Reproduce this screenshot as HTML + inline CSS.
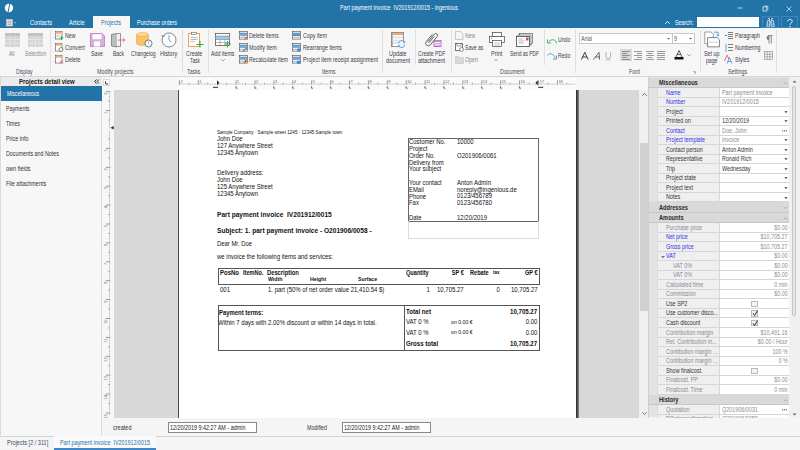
<!DOCTYPE html>
<html><head><meta charset="utf-8">
<style>
*{margin:0;padding:0;box-sizing:border-box}
html,body{width:800px;height:450px;overflow:hidden;background:#f5f5f5;font-family:"Liberation Sans",sans-serif;color:#333}
.a{position:absolute;white-space:nowrap}
.t{position:absolute;white-space:nowrap;font-size:6.6px;line-height:6px;transform:scaleX(0.82);transform-origin:0 0}
.c{position:absolute;white-space:nowrap;font-size:6.6px;line-height:6.5px;text-align:center;width:40px;transform:scaleX(0.82)}
#title{left:0;top:0;width:800px;height:28px;background:#2274a8}
#ribbon{left:0;top:28px;width:800px;height:49px;background:#f6f6f6;border-bottom:1px solid #d6d6d6}
.sep{position:absolute;width:1px;background:#dedede;top:30px;height:43px}
.r{color:#3c3c48}
.g{color:#4a4a5c}
.dis{color:#888}
svg{position:absolute;overflow:visible}
</style></head><body>
<!-- ============ TITLE BAR ============ -->
<div class="a" id="title"></div>
<svg style="left:4px;top:3px" width="10" height="10" viewBox="0 0 10 10"><circle cx="5" cy="5" r="4.2" fill="#fff"></circle><path d="M5.8 0.5 L4 9.5" stroke="#2274a8" stroke-width="1"></path></svg>
<div class="t" style="left: 340px; top: 5px; color: rgb(255, 255, 255); width: auto; transform: scaleX(0.8191); transform-origin: 0px 0px;">Part payment invoice&nbsp; IV201912/0015 - ingenious</div>
<svg style="left:737px;top:7px" width="6" height="2" viewBox="0 0 6 2"><path d="M0.5 1h5" stroke="#e8f0f6" stroke-width="0.8"></path></svg>
<svg style="left:761.5px;top:5px" width="7" height="7" viewBox="0 0 7 7"><rect x="1" y="1.8" width="3.8" height="4.2" fill="none" stroke="#e8f0f6" stroke-width="0.8"></rect><path d="M2.2 1h3.6v4" fill="none" stroke="#e8f0f6" stroke-width="0.6"></path></svg>
<svg style="left:786px;top:5.5px" width="6" height="6" viewBox="0 0 6 6"><path d="M0.5 0.5L5.5 5.5M5.5 0.5L0.5 5.5" stroke="#e8f0f6" stroke-width="0.7"></path></svg>
<!-- tabs -->
<svg style="left:5.5px;top:19px" width="10" height="7" viewBox="0 0 10 7"><rect x="0.5" y="0.5" width="6" height="6.5" fill="#e8e8e8" stroke="#ccc" stroke-width="0.6"></rect><path d="M1.5 2.2h4M1.5 3.8h4M1.5 5.4h4" stroke="#888" stroke-width="0.6"></path><path d="M8 3.5l1 1 1-1z" fill="#fff"></path></svg>
<div class="t" style="left: 30px; top: 19.5px; color: rgb(255, 255, 255); width: auto; transform: scaleX(0.8451); transform-origin: 0px 0px;">Contacts</div>
<div class="t" style="left: 68.5px; top: 19.5px; color: rgb(255, 255, 255); width: auto; transform: scaleX(0.8457); transform-origin: 0px 0px;">Article</div>
<div class="a" style="left:92.5px;top:16px;width:37px;height:12px;background:#f6f6f6"></div>
<div class="t" style="left: 100.5px; top: 19.5px; color: rgb(34, 116, 168); width: auto; transform: scaleX(0.8393); transform-origin: 0px 0px;">Projects</div>
<div class="t" style="left: 136.5px; top: 19.5px; color: rgb(255, 255, 255); width: auto; transform: scaleX(0.8266); transform-origin: 0px 0px;">Purchase orders</div>
<svg style="left:664.5px;top:20.5px" width="5" height="3" viewBox="0 0 5 3"><path d="M0.3 2.7L2.5 0.5L4.7 2.7" stroke="#fff" stroke-width="0.9" fill="none"></path></svg>
<div class="t" style="left: 675px; top: 19.5px; color: rgb(255, 255, 255); width: auto; transform: scaleX(0.8137); transform-origin: 0px 0px;">Search:</div>
<div class="a" style="left:697px;top:17px;width:62px;height:10px;background:#fff"></div>
<div class="a" style="left:762px;top:16px;width:17px;height:12px;border:1px solid #3f87b8"></div>
<div class="a" style="left:781px;top:16px;width:17px;height:12px;border:1px solid #3f87b8"></div>
<svg style="left:766px;top:17.5px" width="9" height="9" viewBox="0 0 9 9"><path d="M1.8 0.5h1.6v2.2M5.6 2.7V0.5h1.6M0.7 8.3l0.9-5.6h2.2v5.6zM5.2 8.3V2.7h2.2l0.9 5.6zM3.8 4.2h1.4" stroke="#fff" stroke-width="0.7" fill="none"></path><path d="M1 6.2h2.6M5.4 6.2h2.6" stroke="#fff" stroke-width="0.5"></path></svg>
<svg style="left:787px;top:18.5px" width="6" height="9" viewBox="0 0 6 9"><path d="M0.8 2.4c0-1.3 1-2 2.2-2s2.2 0.8 2.2 1.9c0 1.6-2.1 1.7-2.1 3.6" stroke="#fff" stroke-width="0.9" fill="none"></path><rect x="2.5" y="7" width="1" height="1.1" fill="#fff"></rect></svg>
<!-- ============ RIBBON ============ -->
<div class="a" id="ribbon"></div>

<!-- Display group -->
<svg style="left:5px;top:33px" width="15" height="14" viewBox="0 0 15 14"><rect x="0" y="0" width="15" height="14" fill="#d4d4d4"></rect><rect x="0" y="0" width="15" height="3" fill="#c2c2c2"></rect><path d="M0 6.5h15M0 10h15M5 3v11M10 3v11" stroke="#eaeaea" stroke-width="0.7"></path></svg>
<div class="dis t" style="left: 9.4px; top: 51px; width: auto; transform: scaleX(0.7642); transform-origin: 0px 0px;">All</div>
<svg style="left:28px;top:33px" width="15" height="14" viewBox="0 0 15 14"><rect x="0" y="0" width="15" height="14" fill="#d4d4d4"></rect><rect x="0" y="0" width="15" height="3" fill="#c2c2c2"></rect><path d="M0 6.5h15M0 10h15M4 3v11M7.5 3v11M11 3v11" stroke="#eaeaea" stroke-width="0.7"></path></svg>
<div class="dis t" style="left: 25px; top: 51px; width: auto; transform: scaleX(0.7737); transform-origin: 0px 0px;">Selection</div>
<div class="g t" style="left: 16.25px; top: 69px; width: auto; transform: scaleX(0.763); transform-origin: 0px 0px;">Display</div>
<div class="sep" style="left:50px"></div>
<!-- Modify projects group -->
<svg style="left:55px;top:31px" width="9" height="9" viewBox="0 0 9 9"><rect x="0.5" y="0.5" width="6.5" height="7.5" fill="#fff" stroke="#555" stroke-width="0.6"></rect><rect x="0.8" y="0.8" width="6" height="2" fill="#f4b27a"></rect><path d="M1.5 4.3h4M1.5 5.8h2" stroke="#888" stroke-width="0.5"></path><path d="M6.5 5v4M4.5 7h4" stroke="#2aa952" stroke-width="1"></path></svg>
<div class="t r" style="left: 65px; top: 33px; width: auto; transform: scaleX(0.7953); transform-origin: 0px 0px;">New</div>
<svg style="left:55px;top:43px" width="9" height="9" viewBox="0 0 9 9"><rect x="0.5" y="0.5" width="6.5" height="7.5" fill="#fff" stroke="#555" stroke-width="0.6"></rect><rect x="0.8" y="0.8" width="6" height="2" fill="#f4b27a"></rect><circle cx="6" cy="6.5" r="2" fill="#fff" stroke="#444" stroke-width="0.6"></circle></svg>
<div class="t r" style="left: 65px; top: 45px; width: auto; transform: scaleX(0.8552); transform-origin: 0px 0px;">Convert</div>
<svg style="left:55px;top:55px" width="9" height="9" viewBox="0 0 9 9"><rect x="0.5" y="0.5" width="6.5" height="7.5" fill="#fff" stroke="#555" stroke-width="0.6"></rect><rect x="0.8" y="0.8" width="6" height="2" fill="#f4b27a"></rect><path d="M5 5.5l3 3M8 5.5l-3 3" stroke="#e24b4b" stroke-width="0.8"></path></svg>
<div class="t r" style="left: 65px; top: 57px; width: auto; transform: scaleX(0.8184); transform-origin: 0px 0px;">Delete</div>
<svg style="left:89.5px;top:32.5px" width="15" height="14" viewBox="0 0 15 14"><path d="M0.5 0.5h11.5l2.5 2.5v10.5h-14z" fill="#d8b0dc" stroke="#b87cc0" stroke-width="0.8"></path><rect x="2.5" y="1.2" width="9" height="5" fill="#fff"></rect><rect x="4" y="8.5" width="6" height="5" fill="#fff"></rect></svg>
<div class="r t" style="left: 90.8px; top: 51px; width: auto; transform: scaleX(0.7983); transform-origin: 0px 0px;">Save</div>
<svg style="left:111px;top:32.5px" width="16" height="14" viewBox="0 0 16 14"><path d="M0.5 1.5l5-1v13.5l-5-1z" fill="#bdbdbd" stroke="#555" stroke-width="0.6"></path><path d="M5.5 0.5h4v13h-4" fill="#f2f2f2" stroke="#555" stroke-width="0.6"></path><path d="M7 7h7M12 5l2 2-2 2" stroke="#ee5a5a" stroke-width="0.8" fill="none"></path></svg>
<div class="r t" style="left: 112.7px; top: 51px; width: auto; transform: scaleX(0.7565); transform-origin: 0px 0px;">Back</div>
<svg style="left:136px;top:31.5px" width="17" height="16" viewBox="0 0 17 16"><path d="M0.5 2.5v9c0 1.2 2.8 2 6 2s6-0.8 6-2v-9" fill="#f7c46c" stroke="#e0a040" stroke-width="0.5"></path><ellipse cx="6.5" cy="2.5" rx="6" ry="2" fill="#fbd98e" stroke="#e0a040" stroke-width="0.5"></ellipse><circle cx="12.5" cy="11.5" r="3.5" fill="#fff" stroke="#444" stroke-width="0.7"></circle><path d="M12.5 9.5v2l1 1" stroke="#3a8fd6" stroke-width="0.6" fill="none"></path></svg>
<div class="r t" style="left: 131px; top: 51px; width: auto; transform: scaleX(0.7741); transform-origin: 0px 0px;">Changelog</div>
<svg style="left:161px;top:31.5px" width="16" height="16" viewBox="0 0 16 16"><circle cx="8" cy="8" r="7" fill="#fff" stroke="#555" stroke-width="0.7"></circle><path d="M8 3v5l2.5 2.5" stroke="#3a8fd6" stroke-width="0.8" fill="none"></path><path d="M0.5 3l1.5 2 2-1.5" stroke="#555" stroke-width="0.6" fill="none"></path></svg>
<div class="r t" style="left: 159.9px; top: 51px; width: auto; transform: scaleX(0.8433); transform-origin: 0px 0px;">History</div>
<div class="g t" style="left: 97.2px; top: 69px; width: auto; transform: scaleX(0.8231); transform-origin: 0px 0px;">Modify projects</div>
<div class="sep" style="left:182px"></div>
<!-- Tasks -->
<svg style="left:187.5px;top:31.5px" width="16" height="16" viewBox="0 0 16 16"><rect x="0.5" y="1.5" width="11" height="13" fill="#fff" stroke="#f0a050" stroke-width="1"></rect><rect x="3.5" y="0.5" width="5" height="2" fill="#fff" stroke="#666" stroke-width="0.6"></rect><path d="M2.5 5.5h7M2.5 7.5h7M2.5 9.5h4" stroke="#999" stroke-width="0.7"></path><path d="M12 9v6.5M8.5 12.5h7" stroke="#2aa952" stroke-width="1"></path></svg>
<div class="r t" style="left: 186px; top: 51px; width: auto; transform: scaleX(0.8183); transform-origin: 0px 0px;">Create</div>
<div class="r t" style="left: 189.7px; top: 57.5px; width: auto; transform: scaleX(0.7226); transform-origin: 0px 0px;">Task</div>
<div class="g t" style="left: 187.2px; top: 69px; width: auto; transform: scaleX(0.8007); transform-origin: 0px 0px;">Tasks</div>
<div class="sep" style="left:207.5px"></div>
<!-- Items -->
<svg style="left:214.5px;top:32.5px" width="17" height="14" viewBox="0 0 17 14"><rect x="0.5" y="0.5" width="14" height="12" fill="#fff" stroke="#444" stroke-width="0.7"></rect><rect x="0.8" y="3" width="13.5" height="3.5" fill="#9ec8ee"></rect><path d="M0.5 3h14M0.5 6.5h14M0.5 9.5h14M5 6.5v6M10 6.5v6" stroke="#555" stroke-width="0.4"></path><path d="M12.5 8v6.5M9.5 11h6.5" stroke="#2aa952" stroke-width="1"></path></svg>
<div class="r t" style="left: 211.2px; top: 51px; width: auto; transform: scaleX(0.8013); transform-origin: 0px 0px;">Add items</div>
<svg style="left:220.5px;top:59px" width="4" height="2" viewBox="0 0 4 2"><path d="M0 0l2 2 2-2" stroke="#777" stroke-width="0.6" fill="none"></path></svg>
<svg style="left:239px;top:31px" width="10" height="9" viewBox="0 0 10 9"><rect x="0.5" y="0.5" width="8" height="7.6" fill="#fff" stroke="#444" stroke-width="0.6"></rect><rect x="0.8" y="2.1" width="7.4" height="2.8" fill="#6aa8de"></rect><path d="M0.5 2h8M0.5 6.3h8" stroke="#555" stroke-width="0.45"></path><path d="M5.3 5.6l3 3M8.3 5.6l-3 3" stroke="#e24b4b" stroke-width="0.9"></path></svg>
<div class="t r" style="left: 249px; top: 33px; width: auto; transform: scaleX(0.8075); transform-origin: 0px 0px;">Delete items</div>
<svg style="left:239px;top:43px" width="10" height="9" viewBox="0 0 10 9"><rect x="0.5" y="0.5" width="8" height="7.6" fill="#fff" stroke="#444" stroke-width="0.6"></rect><rect x="0.8" y="2.1" width="7.4" height="2.8" fill="#6aa8de"></rect><path d="M0.5 2h8M0.5 6.3h8" stroke="#555" stroke-width="0.45"></path><path d="M4 8.5l4-4" stroke="#3a8fd6" stroke-width="1.1"></path></svg>
<div class="t r" style="left: 249px; top: 45px; width: auto; transform: scaleX(0.8215); transform-origin: 0px 0px;">Modify item</div>
<svg style="left:239px;top:55px" width="10" height="9" viewBox="0 0 10 9"><rect x="0.5" y="0.5" width="8" height="7.6" fill="#fff" stroke="#444" stroke-width="0.6"></rect><rect x="0.8" y="2.1" width="7.4" height="2.8" fill="#6aa8de"></rect><path d="M0.5 2h8M0.5 6.3h8" stroke="#555" stroke-width="0.45"></path><path d="M5 8.8l1.2-3.5h2" stroke="#f08a30" stroke-width="1"></path></svg>
<div class="t r" style="left: 249px; top: 57px; width: auto; transform: scaleX(0.8); transform-origin: 0px 0px;">Recalculate item</div>
<svg style="left:292px;top:31px" width="10" height="9" viewBox="0 0 10 9"><rect x="0.5" y="0.5" width="8" height="7.6" fill="#fff" stroke="#444" stroke-width="0.6"></rect><rect x="0.8" y="2.1" width="7.4" height="2.8" fill="#6aa8de"></rect><path d="M0.5 2h8M0.5 6.3h8" stroke="#555" stroke-width="0.45"></path><path d="M0.5 4.3h8" stroke="#3a8fd6" stroke-width="1.4"></path></svg>
<div class="t r" style="left: 302.7px; top: 33px; width: auto; transform: scaleX(0.8084); transform-origin: 0px 0px;">Copy item</div>
<svg style="left:292px;top:43px" width="10" height="9" viewBox="0 0 10 9"><rect x="0.5" y="0.5" width="8" height="7.6" fill="#fff" stroke="#444" stroke-width="0.6"></rect><rect x="0.8" y="2.1" width="7.4" height="2.8" fill="#6aa8de"></rect><path d="M0.5 2h8M0.5 6.3h8" stroke="#555" stroke-width="0.45"></path><circle cx="6.8" cy="7" r="1.8" fill="#3a8fd6"></circle></svg>
<div class="t r" style="left: 302.7px; top: 45px; width: auto; transform: scaleX(0.8); transform-origin: 0px 0px;">Rearrange items</div>
<svg style="left:292px;top:55px" width="10" height="9" viewBox="0 0 10 9"><rect x="0.5" y="0.5" width="8" height="7.6" fill="#fff" stroke="#444" stroke-width="0.6"></rect><rect x="0.8" y="2.1" width="7.4" height="2.8" fill="#6aa8de"></rect><path d="M0.5 2h8M0.5 6.3h8" stroke="#555" stroke-width="0.45"></path><rect x="4.8" y="5.8" width="4" height="3" rx="0.6" fill="#3a8fd6"></rect></svg>
<div class="t r" style="left: 302.7px; top: 57px; width: auto; transform: scaleX(0.8154); transform-origin: 0px 0px;">Project item receipt assignment</div>

<div class="g t" style="left: 321.5px; top: 69px; width: auto; transform: scaleX(0.8372); transform-origin: 0px 0px;">Items</div>
<div class="sep" style="left:381.5px"></div>
<svg style="left:390.5px;top:31.5px" width="17" height="17" viewBox="0 0 17 17"><rect x="0.6" y="0.6" width="12" height="14" fill="#fff" stroke="#777" stroke-width="0.8"></rect><rect x="0.6" y="0.6" width="1" height="14" fill="#888"></rect><rect x="1.4" y="1.2" width="10.6" height="1.8" fill="#f4a060"></rect><rect x="1.6" y="4.3" width="10.4" height="2" fill="#e2e2e2"></rect><rect x="1.6" y="7.6" width="10.4" height="2" fill="#e2e2e2"></rect><path d="M1.5 11h10" stroke="#999" stroke-width="0.5"></path><circle cx="10.6" cy="12.2" r="3.6" fill="#f6f6f6" opacity="0.9"></circle><path d="M7.6 11.6a3 3 0 0 1 5.6-1.4M13.6 12.8a3 3 0 0 1-5.6 1.4" stroke="#4a9ae0" stroke-width="0.9" fill="none"></path><path d="M13.8 9v1.8h-1.8M7.4 15.4v-1.8h1.8" stroke="#4a9ae0" stroke-width="0.8" fill="none"></path></svg>
<div class="r t" style="left: 388.6px; top: 51px; width: auto; transform: scaleX(0.8276); transform-origin: 0px 0px;">Update</div>
<div class="r t" style="left: 386px; top: 57.5px; width: auto; transform: scaleX(0.8285); transform-origin: 0px 0px;">document</div>
<div class="sep" style="left:414.5px;height:35px"></div>
<svg style="left:424px;top:31px" width="18" height="17" viewBox="0 0 18 17"><g transform="rotate(40 7 8)"><path d="M5 3.5V13a2.6 2.6 0 0 0 5.2 0V2.2a1.9 1.9 0 0 0-3.8 0V11.5a0.7 0.7 0 0 0 1.4 0V4" stroke="#555" stroke-width="0.85" fill="none"></path></g><rect x="10" y="9.5" width="7" height="6" fill="#fff" stroke="#a050b0" stroke-width="0.8"></rect><rect x="10" y="9.5" width="7" height="1.6" fill="#c58ad0"></rect><path d="M11 12.6h5M11 14.2h5" stroke="#a050b0" stroke-width="0.55"></path></svg>
<div class="r t" style="left: 418px; top: 51px; width: auto; transform: scaleX(0.7842); transform-origin: 0px 0px;">Create PDF</div>
<div class="r t" style="left: 418.3px; top: 57.5px; width: auto; transform: scaleX(0.8276); transform-origin: 0px 0px;">attachment</div>
<div class="sep" style="left:451px"></div>
<svg style="left:455px;top:31px" width="9" height="9" viewBox="0 0 9 9"><path d="M0.5 0.5h5l2.5 2.5v5.5h-7.5z" fill="#f4f4f4" stroke="#aaa" stroke-width="0.6"></path></svg>
<div class="t dis" style="left: 464.8px; top: 33px; width: auto; transform: scaleX(0.7725); transform-origin: 0px 0px;">New</div>
<svg style="left:455px;top:43px" width="9" height="9" viewBox="0 0 9 9"><rect x="0.5" y="0.5" width="7" height="7" fill="#fff" stroke="#444" stroke-width="0.7"></rect><rect x="2" y="0.5" width="4" height="2.5" fill="#fff" stroke="#444" stroke-width="0.5"></rect><circle cx="6.5" cy="6.5" r="2" fill="#fff" stroke="#444" stroke-width="0.6"></circle></svg>
<div class="t r" style="left: 464.8px; top: 45px; width: auto; transform: scaleX(0.7722); transform-origin: 0px 0px;">Save as</div>
<svg style="left:455px;top:55px" width="9" height="9" viewBox="0 0 9 9"><path d="M0.5 1.5h3l1 1h4v6h-8z" fill="#d8d8d8" stroke="#bbb" stroke-width="0.5"></path></svg>
<div class="t dis" style="left: 464.8px; top: 57px; width: auto; transform: scaleX(0.7992); transform-origin: 0px 0px;">Open</div>
<svg style="left:488.5px;top:32px" width="16" height="15" viewBox="0 0 16 15"><rect x="3.5" y="0.5" width="9" height="4" fill="#fff" stroke="#444" stroke-width="0.7"></rect><rect x="0.5" y="4.5" width="15" height="6" fill="#fff" stroke="#444" stroke-width="0.7"></rect><rect x="3.5" y="8.5" width="9" height="6" fill="#fff" stroke="#444" stroke-width="0.7"></rect><path d="M5 11h6M5 13h6" stroke="#888" stroke-width="0.5"></path><circle cx="2.5" cy="6.5" r="0.6" fill="#3a8fd6"></circle></svg>
<div class="r t" style="left: 490.7px; top: 51px; width: auto; transform: scaleX(0.8332); transform-origin: 0px 0px;">Print</div>
<svg style="left:494px;top:59px" width="4" height="2" viewBox="0 0 4 2"><path d="M0 0l2 2 2-2" stroke="#777" stroke-width="0.6" fill="none"></path></svg>
<svg style="left:515.5px;top:33px" width="17" height="14" viewBox="0 0 17 14"><rect x="3.5" y="0.5" width="13" height="10" fill="#fff" stroke="#444" stroke-width="0.6"></rect><rect x="2" y="2" width="13" height="10" fill="#fff" stroke="#444" stroke-width="0.6"></rect><rect x="0.5" y="3.5" width="13" height="10" fill="#fff" stroke="#444" stroke-width="0.8"></rect><path d="M2.5 6h4M2.5 8h6M2.5 10h5" stroke="#888" stroke-width="0.6"></path><rect x="10" y="4.5" width="2.5" height="3" fill="#e24b4b"></rect></svg>
<div class="r t" style="left: 509.5px; top: 51px; width: auto; transform: scaleX(0.7394); transform-origin: 0px 0px;">Send as PDF</div>
<div class="g t" style="left: 500px; top: 69px; width: auto; transform: scaleX(0.815); transform-origin: 0px 0px;">Document</div>
<div class="sep" style="left:543.5px;height:35px"></div>
<svg style="left:546.5px;top:36.5px" width="10" height="7" viewBox="0 0 10 7"><path d="M9.5 6.5c0-4-5-5-7.5-2" stroke="#2aa952" stroke-width="0.9" fill="none"></path><path d="M0.5 2.5v3.5h3.5" stroke="#2aa952" stroke-width="0.9" fill="none"></path></svg>
<div class="t r" style="left: 557.7px; top: 36.5px; width: auto; transform: scaleX(0.7802); transform-origin: 0px 0px;">Undo</div>
<svg style="left:546.5px;top:52.5px" width="10" height="7" viewBox="0 0 10 7"><path d="M0.5 2.5c2-3 6-2 7.5 2" stroke="#3a8fd6" stroke-width="0.9" fill="none"></path><path d="M9.5 2.5v3.5h-3.5" stroke="#3a8fd6" stroke-width="0.9" fill="none"></path></svg>
<div class="t r" style="left: 557.7px; top: 52.5px; width: auto; transform: scaleX(0.7802); transform-origin: 0px 0px;">Redo</div>
<div class="sep" style="left:574.5px"></div>
<!-- Font group -->
<div class="a" style="left:579px;top:33px;width:93.5px;height:11px;background:#fff;border:1px solid #c8c8c8"></div>
<div class="t" style="left: 581.2px; top: 35.5px; color: rgb(90, 90, 90); width: auto; transform: scaleX(0.8331); transform-origin: 0px 0px;">Arial</div>
<svg style="left:666.5px;top:38px" width="3" height="2" viewBox="0 0 3 2"><path d="M0 0h3l-1.5 1.5z" fill="#555"></path></svg>
<div class="a" style="left:672px;top:33px;width:22.5px;height:11px;background:#fff;border:1px solid #c8c8c8"></div>
<div class="t" style="left:674px;top:35.5px;color:#5a5a5a">9</div>
<svg style="left:689px;top:38px" width="3" height="2" viewBox="0 0 3 2"><path d="M0 0h3l-1.5 1.5z" fill="#555"></path></svg>
<svg style="left:581px;top:51.5px" width="8" height="8" viewBox="0 0 8 8"><path d="M0.4 7.6L3.8 0.3 7.2 7.6M1.7 5h4.2" stroke="#333" stroke-width="0.95" fill="none"></path></svg>
<svg style="left:593px;top:51.5px" width="9" height="8" viewBox="0 0 9 8"><path d="M0.4 7.6L6 0.3 6.6 7.6M2.4 5h4.2" stroke="#444" stroke-width="0.8" fill="none"></path></svg>
<svg style="left:605px;top:51.5px" width="7" height="9" viewBox="0 0 7 9"><path d="M1 0.3v3.8c0 1.6 1 2.3 2.3 2.3s2.3-0.7 2.3-2.3V0.3" stroke="#888" stroke-width="0.65" fill="none"></path><path d="M0.5 7.8h5.6" stroke="#999" stroke-width="0.6"></path></svg>
<div class="a" style="left:619.5px;top:49px;width:12px;height:12px;background:#d9d9d9"></div>
<svg style="left:621.5px;top:50.5px" width="8" height="9" viewBox="0 0 8 9"><path d="M0 0.5h8M0 2.5h5M0 4.5h8M0 6.5h5M0 8.5h8" stroke="#666" stroke-width="0.65"></path></svg>
<svg style="left:634px;top:50.5px" width="8" height="9" viewBox="0 0 8 9"><path d="M0 0.5h8M3 2.5h5M0 4.5h8M3 6.5h5M0 8.5h8" stroke="#666" stroke-width="0.65"></path></svg>
<svg style="left:645.5px;top:50.5px" width="8" height="9" viewBox="0 0 8 9"><path d="M0 0.5h8M1.5 2.5h5M0 4.5h8M1.5 6.5h5M0 8.5h8" stroke="#666" stroke-width="0.65"></path></svg>
<svg style="left:657px;top:50.5px" width="8" height="9" viewBox="0 0 8 9"><path d="M0 0.5h8M0 2.5h8M0 4.5h8M0 6.5h8M0 8.5h8" stroke="#666" stroke-width="0.65"></path></svg>

<svg style="left:674px;top:50px" width="10" height="10" viewBox="0 0 10 10"><path d="M2 7l3-6.5 3 6.5M3.2 4.5h3.6" stroke="#333" stroke-width="0.8" fill="none"></path><rect x="0.5" y="7" width="9" height="2.5" fill="#111"></rect></svg>
<svg style="left:687px;top:54px" width="4" height="2" viewBox="0 0 4 2"><path d="M0 0l2 2 2-2" stroke="#777" stroke-width="0.6" fill="none"></path></svg>
<div class="g t" style="left: 628.8px; top: 69px; width: auto; transform: scaleX(0.8256); transform-origin: 0px 0px;">Font</div>
<svg style="left:693px;top:71px" width="3" height="3" viewBox="0 0 3 3"><path d="M0 0.5h2.5v2.5" stroke="#888" stroke-width="0.5" fill="none"></path><path d="M0.5 0.5l2 2" stroke="#888" stroke-width="0.5"></path></svg>
<div class="sep" style="left:699.5px"></div>
<!-- Settings -->
<svg style="left:703.5px;top:31px" width="17" height="17" viewBox="0 0 17 17"><path d="M0.8 1h6.3l2.3 2.3v9.4h-8.6z" fill="#fff" stroke="#666" stroke-width="0.6"></path><path d="M3.6 6.6h9.6l2.3 2.3v6.9h-11.9z" fill="#fff" stroke="#555" stroke-width="0.7"></path><path d="M4.8 11.2h9.6" stroke="#bbb" stroke-width="0.7"></path><path d="M10 1.2h4v3.6" stroke="#3a8fd6" stroke-width="0.8" fill="none"></path><path d="M12.8 3.8l1.2 1.4 1.2-1.4" stroke="#3a8fd6" stroke-width="0.7" fill="none"></path></svg>
<div class="r t" style="left: 703.7px; top: 51px; width: auto; transform: scaleX(0.8177); transform-origin: 0px 0px;">Set up</div>
<div class="r t" style="left: 705.8px; top: 57.5px; width: auto; transform: scaleX(0.777); transform-origin: 0px 0px;">page</div>
<svg style="left:724.5px;top:31.5px" width="8" height="8" viewBox="0 0 8 8"><path d="M3 0.5h5M3 2.5h5M3 4.5h5M3 6.5h5" stroke="#444" stroke-width="0.7"></path><path d="M0 3.5h2" stroke="#3a8fd6" stroke-width="1"></path></svg>
<div class="t r" style="left: 734.7px; top: 33px; width: auto; transform: scaleX(0.815); transform-origin: 0px 0px;">Paragraph</div>
<svg style="left:724.5px;top:43.5px" width="8" height="8" viewBox="0 0 8 8"><path d="M3 0.5h5M3 3.5h5M3 6.5h5" stroke="#444" stroke-width="0.7"></path><path d="M1 0v8" stroke="#3a8fd6" stroke-width="0.8"></path></svg>
<div class="t r" style="left: 734.7px; top: 45px; width: auto; transform: scaleX(0.7903); transform-origin: 0px 0px;">Numbering</div>
<svg style="left:724px;top:55px" width="9" height="9" viewBox="0 0 9 9"><path d="M0.5 6l2.5-6 2 4" stroke="#e24b4b" stroke-width="0.8" fill="none"></path><path d="M3 8.5l2.5-6 2.5 6M4 6.5h3" stroke="#3a8fd6" stroke-width="0.8" fill="none"></path></svg>
<div class="t r" style="left: 734.7px; top: 57px; width: auto; transform: scaleX(0.7958); transform-origin: 0px 0px;">Styles</div>
<svg style="left:765px;top:34.5px" width="8" height="9" viewBox="0 0 8 9"><path d="M3.8 0.6a2.2 2.2 0 0 0 0 4.4z" fill="#777"></path><path d="M3 0.6h4.4M4 0.6V8.6M6.3 0.6V8.6" stroke="#777" stroke-width="0.85" fill="none"></path></svg>
<svg style="left:764px;top:51px" width="9" height="9" viewBox="0 0 9 9"><rect x="0.5" y="0.5" width="8" height="8" fill="none" stroke="#888" stroke-width="0.6"></rect><path d="M3.2 0.5v8M5.8 0.5v8M0.5 3.2h8M0.5 5.8h8" stroke="#888" stroke-width="0.6"></path></svg>
<div class="g t" style="left: 728px; top: 69px; width: auto; transform: scaleX(0.8058); transform-origin: 0px 0px;">Settings</div>
<div class="sep" style="left:776px"></div>

<!-- ============ LEFT PANEL ============ -->
<div class="a" style="left:0;top:77px;width:102px;height:358px;background:#f7f7f7;border-right:1px solid #dadada;border-left:1px solid #dadada"></div>
<div class="a" style="left:1px;top:77px;width:100.5px;height:9px;background:#ebebeb"></div>
<div class="t" style="left: 18.9px; top: 79px; font-weight: bold; color: rgb(26, 26, 26); font-size: 6.8px; width: auto; transform: scaleX(0.8844); transform-origin: 0px 0px;">Projects detail view</div>
<svg style="left:94px;top:79px" width="6" height="5" viewBox="0 0 6 5"><path d="M2.5 0.5L0.7 2.5 2.5 4.5M5 0.5L3.2 2.5 5 4.5" stroke="#222" stroke-width="1" fill="none"></path></svg>
<div class="a" style="left:1px;top:86px;width:100.5px;height:15px;background:#2274a8"></div>
<div class="t" style="left: 6.7px; top: 90.5px; color: rgb(255, 255, 255); width: auto; transform: scaleX(0.7659); transform-origin: 0px 0px;">Miscellaneous</div>
<div class="t" style="left: 6.4px; top: 105.5px; color: rgb(51, 51, 51); width: auto; transform: scaleX(0.8013); transform-origin: 0px 0px;">Payments</div>
<div class="t" style="left: 6.4px; top: 120.5px; color: rgb(51, 51, 51); width: auto; transform: scaleX(0.7845); transform-origin: 0px 0px;">Times</div>
<div class="t" style="left: 6.4px; top: 135.5px; color: rgb(51, 51, 51); width: auto; transform: scaleX(0.8145); transform-origin: 0px 0px;">Price info</div>
<div class="t" style="left: 6.4px; top: 150.5px; color: rgb(51, 51, 51); width: auto; transform: scaleX(0.8123); transform-origin: 0px 0px;">Documents and Notes</div>
<div class="t" style="left: 6.4px; top: 165.5px; color: rgb(51, 51, 51); width: auto; transform: scaleX(0.8388); transform-origin: 0px 0px;">own fields</div>
<div class="t" style="left: 6.4px; top: 180.5px; color: rgb(51, 51, 51); width: auto; transform: scaleX(0.831); transform-origin: 0px 0px;">File attachments</div>

<!-- ============ DOCUMENT AREA ============ -->
<div class="a" style="left:102px;top:77px;width:546.5px;height:340px;background:#f7f7f7"></div>
<div class="a" style="left:102.5px;top:79px;width:7.5px;height:7px;background:#fff;border:1px solid #dcdcdc"></div>
<svg style="left:104.8px;top:81.2px" width="4" height="4" viewBox="0 0 4 4"><path d="M0.6 0.2v2.8h2.6" stroke="#222" stroke-width="0.9" fill="none"></path></svg>
<div class="a" style="left:114px;top:90px;width:525px;height:328px;background:#d8d8d8"></div>
<div class="a" style="left:178px;top:90px;width:1px;height:328px;background:#4a4a4a"></div>
<div class="a" style="left:179px;top:90px;width:397px;height:328px;background:#fff"></div>
<div class="a" style="left:576px;top:90px;width:3px;height:328px;background:linear-gradient(to right,#222,#888)"></div>
<!-- ============ RIGHT PANEL ============ -->
<div class="a" style="left:649px;top:77.00px;width:151px;height:340px;background:#e3e3e3"></div>
<div class="a" style="left:789px;top:77.00px;width:11px;height:340px;background:#f0f0f0"></div>
<div class="a" style="left:791.8px;top:86.00px;width:4px;height:230px;border:0.8px solid #c4c4c4;border-radius:2px;background:#e8e8e8"></div>
<svg style="left:792px;top:79.50px" width="5" height="3" viewBox="0 0 5 3"><path d="M0.5 2.5L2.5 0.5 4.5 2.5z" fill="#666"></path></svg>
<svg style="left:792px;top:413.18px" width="5" height="3" viewBox="0 0 5 3"><path d="M0.5 0.5L2.5 2.5 4.5 0.5z" fill="#666"></path></svg>
<div class="a" style="left:649px;top:77.50px;width:140px;height:10.5px;background:#d9d9d9;border-bottom:0.6px solid #c6c6c6"></div>
<div class="a" style="left:659px;top:78.80px;font-size:6.3px;line-height:7px;font-weight:bold;color:#2a2a2a;transform:scaleX(0.9);transform-origin:0 0">Miscellaneous</div>
<svg style="left:783px;top:81.50px" width="5" height="3" viewBox="0 0 5 3"><path d="M0.5 2.5L2.5 0.7 4.5 2.5" stroke="#999" stroke-width="0.7" fill="none"></path></svg>
<div class="a" style="left:657px;top:88.00px;width:62px;height:9.5px;background:#efefef;border-bottom:0.5px solid #d6d6d6;border-left:0.5px solid #dadada"></div>
<div class="a" style="left:719px;top:88.00px;width:70px;height:9.5px;background:#fff;border-bottom:0.5px solid #d6d6d6;border-left:0.5px solid #d6d6d6"></div>
<div class="a" style="left:666px;top:89.50px;font-size:6.3px;line-height:6.5px;transform:scaleX(0.86);transform-origin:0 0;color:#3030e6">Name</div>
<div class="a" style="left:722px;top:89.50px;font-size:6.3px;line-height:6.5px;transform:scaleX(0.86);transform-origin:0 0;color:#8a8a95">Part payment invoice</div>
<div class="a" style="left:657px;top:97.52px;width:62px;height:9.5px;background:#efefef;border-bottom:0.5px solid #d6d6d6;border-left:0.5px solid #dadada"></div>
<div class="a" style="left:719px;top:97.52px;width:70px;height:9.5px;background:#fff;border-bottom:0.5px solid #d6d6d6;border-left:0.5px solid #d6d6d6"></div>
<div class="a" style="left:666px;top:99.02px;font-size:6.3px;line-height:6.5px;transform:scaleX(0.86);transform-origin:0 0;color:#3030e6">Number</div>
<div class="a" style="left:722px;top:99.02px;font-size:6.3px;line-height:6.5px;transform:scaleX(0.86);transform-origin:0 0;color:#8a8a95">IV201912/0015</div>
<div class="a" style="left:657px;top:107.04px;width:62px;height:9.5px;background:#efefef;border-bottom:0.5px solid #d6d6d6;border-left:0.5px solid #dadada"></div>
<div class="a" style="left:719px;top:107.04px;width:70px;height:9.5px;background:#fff;border-bottom:0.5px solid #d6d6d6;border-left:0.5px solid #d6d6d6"></div>
<div class="a" style="left:666px;top:108.54px;font-size:6.3px;line-height:6.5px;transform:scaleX(0.86);transform-origin:0 0;color:#333">Project</div>
<svg style="left:783.5px;top:110.85px" width="4" height="2.5" viewBox="0 0 4 2.5"><path d="M0.4 0.2h3.2l-1.6 1.8z" fill="#333"></path></svg>
<div class="a" style="left:657px;top:116.56px;width:62px;height:9.5px;background:#efefef;border-bottom:0.5px solid #d6d6d6;border-left:0.5px solid #dadada"></div>
<div class="a" style="left:719px;top:116.56px;width:70px;height:9.5px;background:#fff;border-bottom:0.5px solid #d6d6d6;border-left:0.5px solid #d6d6d6"></div>
<div class="a" style="left:666px;top:118.06px;font-size:6.3px;line-height:6.5px;transform:scaleX(0.86);transform-origin:0 0;color:#333">Printed on</div>
<div class="a" style="left:722px;top:118.06px;font-size:6.3px;line-height:6.5px;transform:scaleX(0.86);transform-origin:0 0;color:#333">12/20/2019</div>
<svg style="left:783.5px;top:120.37px" width="4" height="2.5" viewBox="0 0 4 2.5"><path d="M0.4 0.2h3.2l-1.6 1.8z" fill="#333"></path></svg>
<div class="a" style="left:657px;top:126.08px;width:62px;height:9.5px;background:#efefef;border-bottom:0.5px solid #d6d6d6;border-left:0.5px solid #dadada"></div>
<div class="a" style="left:719px;top:126.08px;width:70px;height:9.5px;background:#fff;border-bottom:0.5px solid #d6d6d6;border-left:0.5px solid #d6d6d6"></div>
<div class="a" style="left:666px;top:127.58px;font-size:6.3px;line-height:6.5px;transform:scaleX(0.86);transform-origin:0 0;color:#3030e6">Contact</div>
<div class="a" style="left:722px;top:127.58px;font-size:6.3px;line-height:6.5px;transform:scaleX(0.86);transform-origin:0 0;color:#8a8a95">Doe, John</div>
<svg style="left:782.3px;top:130.39px" width="6" height="2" viewBox="0 0 6 2"><circle cx="0.7" cy="0.8" r="0.6" fill="#333"></circle><circle cx="2.6" cy="0.8" r="0.6" fill="#333"></circle><circle cx="4.5" cy="0.8" r="0.6" fill="#333"></circle></svg>
<div class="a" style="left:657px;top:135.60px;width:62px;height:9.5px;background:#efefef;border-bottom:0.5px solid #d6d6d6;border-left:0.5px solid #dadada"></div>
<div class="a" style="left:719px;top:135.60px;width:70px;height:9.5px;background:#fff;border-bottom:0.5px solid #d6d6d6;border-left:0.5px solid #d6d6d6"></div>
<div class="a" style="left:666px;top:137.10px;font-size:6.3px;line-height:6.5px;transform:scaleX(0.86);transform-origin:0 0;color:#3030e6">Project template</div>
<div class="a" style="left:722px;top:137.10px;font-size:6.3px;line-height:6.5px;transform:scaleX(0.86);transform-origin:0 0;color:#8a8a95">Invoice</div>
<svg style="left:783.5px;top:139.41px" width="4" height="2.5" viewBox="0 0 4 2.5"><path d="M0.4 0.2h3.2l-1.6 1.8z" fill="#333"></path></svg>
<div class="a" style="left:657px;top:145.12px;width:62px;height:9.5px;background:#efefef;border-bottom:0.5px solid #d6d6d6;border-left:0.5px solid #dadada"></div>
<div class="a" style="left:719px;top:145.12px;width:70px;height:9.5px;background:#fff;border-bottom:0.5px solid #d6d6d6;border-left:0.5px solid #d6d6d6"></div>
<div class="a" style="left:666px;top:146.62px;font-size:6.3px;line-height:6.5px;transform:scaleX(0.86);transform-origin:0 0;color:#333">Contact person</div>
<div class="a" style="left:722px;top:146.62px;font-size:6.3px;line-height:6.5px;transform:scaleX(0.86);transform-origin:0 0;color:#333">Anton Admin</div>
<svg style="left:783.5px;top:148.93px" width="4" height="2.5" viewBox="0 0 4 2.5"><path d="M0.4 0.2h3.2l-1.6 1.8z" fill="#333"></path></svg>
<div class="a" style="left:657px;top:154.64px;width:62px;height:9.5px;background:#efefef;border-bottom:0.5px solid #d6d6d6;border-left:0.5px solid #dadada"></div>
<div class="a" style="left:719px;top:154.64px;width:70px;height:9.5px;background:#fff;border-bottom:0.5px solid #d6d6d6;border-left:0.5px solid #d6d6d6"></div>
<div class="a" style="left:666px;top:156.14px;font-size:6.3px;line-height:6.5px;transform:scaleX(0.86);transform-origin:0 0;color:#333">Representative</div>
<div class="a" style="left:722px;top:156.14px;font-size:6.3px;line-height:6.5px;transform:scaleX(0.86);transform-origin:0 0;color:#333">Ronald Rich</div>
<svg style="left:783.5px;top:158.45px" width="4" height="2.5" viewBox="0 0 4 2.5"><path d="M0.4 0.2h3.2l-1.6 1.8z" fill="#333"></path></svg>
<div class="a" style="left:657px;top:164.16px;width:62px;height:9.5px;background:#efefef;border-bottom:0.5px solid #d6d6d6;border-left:0.5px solid #dadada"></div>
<div class="a" style="left:719px;top:164.16px;width:70px;height:9.5px;background:#fff;border-bottom:0.5px solid #d6d6d6;border-left:0.5px solid #d6d6d6"></div>
<div class="a" style="left:666px;top:165.66px;font-size:6.3px;line-height:6.5px;transform:scaleX(0.86);transform-origin:0 0;color:#333">Trip</div>
<div class="a" style="left:722px;top:165.66px;font-size:6.3px;line-height:6.5px;transform:scaleX(0.86);transform-origin:0 0;color:#333">Wednesday</div>
<svg style="left:783.5px;top:167.97px" width="4" height="2.5" viewBox="0 0 4 2.5"><path d="M0.4 0.2h3.2l-1.6 1.8z" fill="#333"></path></svg>
<div class="a" style="left:657px;top:173.68px;width:62px;height:9.5px;background:#efefef;border-bottom:0.5px solid #d6d6d6;border-left:0.5px solid #dadada"></div>
<div class="a" style="left:719px;top:173.68px;width:70px;height:9.5px;background:#fff;border-bottom:0.5px solid #d6d6d6;border-left:0.5px solid #d6d6d6"></div>
<div class="a" style="left:666px;top:175.18px;font-size:6.3px;line-height:6.5px;transform:scaleX(0.86);transform-origin:0 0;color:#333">Project state</div>
<svg style="left:783.5px;top:177.49px" width="4" height="2.5" viewBox="0 0 4 2.5"><path d="M0.4 0.2h3.2l-1.6 1.8z" fill="#333"></path></svg>
<div class="a" style="left:657px;top:183.20px;width:62px;height:9.5px;background:#efefef;border-bottom:0.5px solid #d6d6d6;border-left:0.5px solid #dadada"></div>
<div class="a" style="left:719px;top:183.20px;width:70px;height:9.5px;background:#fff;border-bottom:0.5px solid #d6d6d6;border-left:0.5px solid #d6d6d6"></div>
<div class="a" style="left:666px;top:184.70px;font-size:6.3px;line-height:6.5px;transform:scaleX(0.86);transform-origin:0 0;color:#333">Project text</div>
<svg style="left:783.5px;top:187.01px" width="4" height="2.5" viewBox="0 0 4 2.5"><path d="M0.4 0.2h3.2l-1.6 1.8z" fill="#333"></path></svg>
<div class="a" style="left:657px;top:192.72px;width:62px;height:9.5px;background:#efefef;border-bottom:0.5px solid #d6d6d6;border-left:0.5px solid #dadada"></div>
<div class="a" style="left:719px;top:192.72px;width:70px;height:9.5px;background:#fff;border-bottom:0.5px solid #d6d6d6;border-left:0.5px solid #d6d6d6"></div>
<div class="a" style="left:666px;top:194.22px;font-size:6.3px;line-height:6.5px;transform:scaleX(0.86);transform-origin:0 0;color:#333">Notes</div>
<svg style="left:783.5px;top:196.53px" width="4" height="2.5" viewBox="0 0 4 2.5"><path d="M0.4 0.2h3.2l-1.6 1.8z" fill="#333"></path></svg>
<div class="a" style="left:649px;top:202.24px;width:140px;height:10.5px;background:#d9d9d9;border-bottom:0.6px solid #c6c6c6"></div>
<div class="a" style="left:659px;top:203.54px;font-size:6.3px;line-height:7px;font-weight:bold;color:#2a2a2a;transform:scaleX(0.9);transform-origin:0 0">Addresses</div>
<svg style="left:783px;top:206.25px" width="5" height="3" viewBox="0 0 5 3"><path d="M0.5 0.7L2.5 2.5 4.5 0.7" stroke="#999" stroke-width="0.7" fill="none"></path></svg>
<div class="a" style="left:649px;top:212.76px;width:140px;height:10.5px;background:#d9d9d9;border-bottom:0.6px solid #c6c6c6"></div>
<div class="a" style="left:659px;top:214.06px;font-size:6.3px;line-height:7px;font-weight:bold;color:#2a2a2a;transform:scaleX(0.9);transform-origin:0 0">Amounts</div>
<svg style="left:783px;top:216.77px" width="5" height="3" viewBox="0 0 5 3"><path d="M0.5 2.5L2.5 0.7 4.5 2.5" stroke="#999" stroke-width="0.7" fill="none"></path></svg>
<div class="a" style="left:657px;top:223.28px;width:62px;height:9.5px;background:#efefef;border-bottom:0.5px solid #d6d6d6;border-left:0.5px solid #dadada"></div>
<div class="a" style="left:719px;top:223.28px;width:70px;height:9.5px;background:#fff;border-bottom:0.5px solid #d6d6d6;border-left:0.5px solid #d6d6d6"></div>
<div class="a" style="left:666px;top:224.79px;font-size:6.3px;line-height:6.5px;transform:scaleX(0.86);transform-origin:0 0;color:#8a8a95">Purchase price</div>
<div class="a" style="right:12.3px;top:224.79px;font-size:6.3px;line-height:6.5px;transform:scaleX(0.86);transform-origin:100% 0;color:#8a8a95">$0.00</div>
<div class="a" style="left:657px;top:232.80px;width:62px;height:9.5px;background:#efefef;border-bottom:0.5px solid #d6d6d6;border-left:0.5px solid #dadada"></div>
<div class="a" style="left:719px;top:232.80px;width:70px;height:9.5px;background:#fff;border-bottom:0.5px solid #d6d6d6;border-left:0.5px solid #d6d6d6"></div>
<div class="a" style="left:666px;top:234.31px;font-size:6.3px;line-height:6.5px;transform:scaleX(0.86);transform-origin:0 0;color:#3030e6">Net price</div>
<div class="a" style="right:12.3px;top:234.31px;font-size:6.3px;line-height:6.5px;transform:scaleX(0.86);transform-origin:100% 0;color:#8a8a95">$10,705.27</div>
<div class="a" style="left:657px;top:242.32px;width:62px;height:9.5px;background:#efefef;border-bottom:0.5px solid #d6d6d6;border-left:0.5px solid #dadada"></div>
<div class="a" style="left:719px;top:242.32px;width:70px;height:9.5px;background:#fff;border-bottom:0.5px solid #d6d6d6;border-left:0.5px solid #d6d6d6"></div>
<div class="a" style="left:666px;top:243.83px;font-size:6.3px;line-height:6.5px;transform:scaleX(0.86);transform-origin:0 0;color:#3030e6">Gross price</div>
<div class="a" style="right:12.3px;top:243.83px;font-size:6.3px;line-height:6.5px;transform:scaleX(0.86);transform-origin:100% 0;color:#8a8a95">$10,705.27</div>
<div class="a" style="left:657px;top:251.84px;width:62px;height:9.5px;background:#efefef;border-bottom:0.5px solid #d6d6d6;border-left:0.5px solid #dadada"></div>
<div class="a" style="left:719px;top:251.84px;width:70px;height:9.5px;background:#fff;border-bottom:0.5px solid #d6d6d6;border-left:0.5px solid #d6d6d6"></div>
<div class="a" style="left:666px;top:253.35px;font-size:6.3px;line-height:6.5px;transform:scaleX(0.86);transform-origin:0 0;color:#3030e6">VAT</div>
<div class="a" style="right:12.3px;top:253.35px;font-size:6.3px;line-height:6.5px;transform:scaleX(0.86);transform-origin:100% 0;color:#8a8a95">$0.00</div>
<svg style="left:660.5px;top:255.65px" width="4" height="2.5" viewBox="0 0 4 2.5"><path d="M0 0h4l-2 2.2z" fill="#777"></path></svg>
<div class="a" style="left:657px;top:261.36px;width:62px;height:9.5px;background:#efefef;border-bottom:0.5px solid #d6d6d6;border-left:0.5px solid #dadada"></div>
<div class="a" style="left:719px;top:261.36px;width:70px;height:9.5px;background:#fff;border-bottom:0.5px solid #d6d6d6;border-left:0.5px solid #d6d6d6"></div>
<div class="a" style="left:673px;top:262.87px;font-size:6.3px;line-height:6.5px;transform:scaleX(0.86);transform-origin:0 0;color:#8a8a95">VAT 0%</div>
<div class="a" style="right:12.3px;top:262.87px;font-size:6.3px;line-height:6.5px;transform:scaleX(0.86);transform-origin:100% 0;color:#8a8a95">$0.00</div>
<div class="a" style="left:657px;top:270.88px;width:62px;height:9.5px;background:#efefef;border-bottom:0.5px solid #d6d6d6;border-left:0.5px solid #dadada"></div>
<div class="a" style="left:719px;top:270.88px;width:70px;height:9.5px;background:#fff;border-bottom:0.5px solid #d6d6d6;border-left:0.5px solid #d6d6d6"></div>
<div class="a" style="left:673px;top:272.39px;font-size:6.3px;line-height:6.5px;transform:scaleX(0.86);transform-origin:0 0;color:#8a8a95">VAT 0%</div>
<div class="a" style="right:12.3px;top:272.39px;font-size:6.3px;line-height:6.5px;transform:scaleX(0.86);transform-origin:100% 0;color:#8a8a95">$0.00</div>
<div class="a" style="left:657px;top:280.40px;width:62px;height:9.5px;background:#efefef;border-bottom:0.5px solid #d6d6d6;border-left:0.5px solid #dadada"></div>
<div class="a" style="left:719px;top:280.40px;width:70px;height:9.5px;background:#fff;border-bottom:0.5px solid #d6d6d6;border-left:0.5px solid #d6d6d6"></div>
<div class="a" style="left:666px;top:281.91px;font-size:6.3px;line-height:6.5px;transform:scaleX(0.86);transform-origin:0 0;color:#8a8a95">Calculated time</div>
<div class="a" style="right:12.3px;top:281.91px;font-size:6.3px;line-height:6.5px;transform:scaleX(0.86);transform-origin:100% 0;color:#8a8a95">0 min</div>
<div class="a" style="left:657px;top:289.92px;width:62px;height:9.5px;background:#efefef;border-bottom:0.5px solid #d6d6d6;border-left:0.5px solid #dadada"></div>
<div class="a" style="left:719px;top:289.92px;width:70px;height:9.5px;background:#fff;border-bottom:0.5px solid #d6d6d6;border-left:0.5px solid #d6d6d6"></div>
<div class="a" style="left:666px;top:291.43px;font-size:6.3px;line-height:6.5px;transform:scaleX(0.86);transform-origin:0 0;color:#8a8a95">Commission</div>
<div class="a" style="right:12.3px;top:291.43px;font-size:6.3px;line-height:6.5px;transform:scaleX(0.86);transform-origin:100% 0;color:#8a8a95">$0.00</div>
<div class="a" style="left:657px;top:299.44px;width:62px;height:9.5px;background:#efefef;border-bottom:0.5px solid #d6d6d6;border-left:0.5px solid #dadada"></div>
<div class="a" style="left:719px;top:299.44px;width:70px;height:9.5px;background:#fff;border-bottom:0.5px solid #d6d6d6;border-left:0.5px solid #d6d6d6"></div>
<div class="a" style="left:666px;top:300.95px;font-size:6.3px;line-height:6.5px;transform:scaleX(0.86);transform-origin:0 0;color:#333">Use SP2</div>
<div class="a" style="left:751px;top:300.95px;width:6.5px;height:6.5px;border:0.7px solid #b8b8b8;background:#f4f4f4"></div>
<div class="a" style="left:657px;top:308.96px;width:62px;height:9.5px;background:#efefef;border-bottom:0.5px solid #d6d6d6;border-left:0.5px solid #dadada"></div>
<div class="a" style="left:719px;top:308.96px;width:70px;height:9.5px;background:#fff;border-bottom:0.5px solid #d6d6d6;border-left:0.5px solid #d6d6d6"></div>
<div class="a" style="left:666px;top:310.47px;font-size:6.3px;line-height:6.5px;transform:scaleX(0.86);transform-origin:0 0;color:#333">Use customer disco...</div>
<div class="a" style="left:751px;top:310.47px;width:6.5px;height:6.5px;border:0.7px solid #b8b8b8;background:#f4f4f4"></div>
<svg style="left:751.5px;top:309.46px" width="6" height="7" viewBox="0 0 6 7"><path d="M1.1 4.3l1.5 2.1 2.9-4.8" stroke="#222" stroke-width="1" fill="none"></path></svg>
<div class="a" style="left:657px;top:318.48px;width:62px;height:9.5px;background:#efefef;border-bottom:0.5px solid #d6d6d6;border-left:0.5px solid #dadada"></div>
<div class="a" style="left:719px;top:318.48px;width:70px;height:9.5px;background:#fff;border-bottom:0.5px solid #d6d6d6;border-left:0.5px solid #d6d6d6"></div>
<div class="a" style="left:666px;top:319.99px;font-size:6.3px;line-height:6.5px;transform:scaleX(0.86);transform-origin:0 0;color:#333">Cash discount</div>
<div class="a" style="left:751px;top:319.99px;width:6.5px;height:6.5px;border:0.7px solid #b8b8b8;background:#f4f4f4"></div>
<svg style="left:751.5px;top:318.98px" width="6" height="7" viewBox="0 0 6 7"><path d="M1.1 4.3l1.5 2.1 2.9-4.8" stroke="#222" stroke-width="1" fill="none"></path></svg>
<div class="a" style="left:657px;top:328.00px;width:62px;height:9.5px;background:#efefef;border-bottom:0.5px solid #d6d6d6;border-left:0.5px solid #dadada"></div>
<div class="a" style="left:719px;top:328.00px;width:70px;height:9.5px;background:#fff;border-bottom:0.5px solid #d6d6d6;border-left:0.5px solid #d6d6d6"></div>
<div class="a" style="left:666px;top:329.51px;font-size:6.3px;line-height:6.5px;transform:scaleX(0.86);transform-origin:0 0;color:#8a8a95">Contribution margin</div>
<div class="a" style="right:12.3px;top:329.51px;font-size:6.3px;line-height:6.5px;transform:scaleX(0.86);transform-origin:100% 0;color:#8a8a95">$10,491.16</div>
<div class="a" style="left:657px;top:337.52px;width:62px;height:9.5px;background:#efefef;border-bottom:0.5px solid #d6d6d6;border-left:0.5px solid #dadada"></div>
<div class="a" style="left:719px;top:337.52px;width:70px;height:9.5px;background:#fff;border-bottom:0.5px solid #d6d6d6;border-left:0.5px solid #d6d6d6"></div>
<div class="a" style="left:666px;top:339.03px;font-size:6.3px;line-height:6.5px;transform:scaleX(0.86);transform-origin:0 0;color:#8a8a95">Rel. Contribution m...</div>
<div class="a" style="right:12.3px;top:339.03px;font-size:6.3px;line-height:6.5px;transform:scaleX(0.86);transform-origin:100% 0;color:#8a8a95">$0.00 / Hour</div>
<div class="a" style="left:657px;top:347.04px;width:62px;height:9.5px;background:#efefef;border-bottom:0.5px solid #d6d6d6;border-left:0.5px solid #dadada"></div>
<div class="a" style="left:719px;top:347.04px;width:70px;height:9.5px;background:#fff;border-bottom:0.5px solid #d6d6d6;border-left:0.5px solid #d6d6d6"></div>
<div class="a" style="left:666px;top:348.55px;font-size:6.3px;line-height:6.5px;transform:scaleX(0.86);transform-origin:0 0;color:#8a8a95">Contibution margin ...</div>
<div class="a" style="right:12.3px;top:348.55px;font-size:6.3px;line-height:6.5px;transform:scaleX(0.86);transform-origin:100% 0;color:#8a8a95">100 %</div>
<div class="a" style="left:657px;top:356.56px;width:62px;height:9.5px;background:#efefef;border-bottom:0.5px solid #d6d6d6;border-left:0.5px solid #dadada"></div>
<div class="a" style="left:719px;top:356.56px;width:70px;height:9.5px;background:#fff;border-bottom:0.5px solid #d6d6d6;border-left:0.5px solid #d6d6d6"></div>
<div class="a" style="left:666px;top:358.07px;font-size:6.3px;line-height:6.5px;transform:scaleX(0.86);transform-origin:0 0;color:#8a8a95">Contibution margin ...</div>
<div class="a" style="right:12.3px;top:358.07px;font-size:6.3px;line-height:6.5px;transform:scaleX(0.86);transform-origin:100% 0;color:#8a8a95">0 %</div>
<div class="a" style="left:657px;top:366.08px;width:62px;height:9.5px;background:#efefef;border-bottom:0.5px solid #d6d6d6;border-left:0.5px solid #dadada"></div>
<div class="a" style="left:719px;top:366.08px;width:70px;height:9.5px;background:#fff;border-bottom:0.5px solid #d6d6d6;border-left:0.5px solid #d6d6d6"></div>
<div class="a" style="left:666px;top:367.59px;font-size:6.3px;line-height:6.5px;transform:scaleX(0.86);transform-origin:0 0;color:#333">Show finalcost.</div>
<div class="a" style="left:751px;top:367.59px;width:6.5px;height:6.5px;border:0.7px solid #b8b8b8;background:#f4f4f4"></div>
<div class="a" style="left:657px;top:375.60px;width:62px;height:9.5px;background:#efefef;border-bottom:0.5px solid #d6d6d6;border-left:0.5px solid #dadada"></div>
<div class="a" style="left:719px;top:375.60px;width:70px;height:9.5px;background:#fff;border-bottom:0.5px solid #d6d6d6;border-left:0.5px solid #d6d6d6"></div>
<div class="a" style="left:666px;top:377.11px;font-size:6.3px;line-height:6.5px;transform:scaleX(0.86);transform-origin:0 0;color:#8a8a95">Finalcost. PP</div>
<div class="a" style="right:12.3px;top:377.11px;font-size:6.3px;line-height:6.5px;transform:scaleX(0.86);transform-origin:100% 0;color:#8a8a95">$0.00</div>
<div class="a" style="left:657px;top:385.12px;width:62px;height:9.5px;background:#efefef;border-bottom:0.5px solid #d6d6d6;border-left:0.5px solid #dadada"></div>
<div class="a" style="left:719px;top:385.12px;width:70px;height:9.5px;background:#fff;border-bottom:0.5px solid #d6d6d6;border-left:0.5px solid #d6d6d6"></div>
<div class="a" style="left:666px;top:386.63px;font-size:6.3px;line-height:6.5px;transform:scaleX(0.86);transform-origin:0 0;color:#8a8a95">Finalcost. Time</div>
<div class="a" style="right:12.3px;top:386.63px;font-size:6.3px;line-height:6.5px;transform:scaleX(0.86);transform-origin:100% 0;color:#8a8a95">0 min</div>
<div class="a" style="left:649px;top:394.64px;width:140px;height:10.5px;background:#d9d9d9;border-bottom:0.6px solid #c6c6c6"></div>
<div class="a" style="left:659px;top:395.95px;font-size:6.3px;line-height:7px;font-weight:bold;color:#2a2a2a;transform:scaleX(0.9);transform-origin:0 0">History</div>
<svg style="left:783px;top:398.65px" width="5" height="3" viewBox="0 0 5 3"><path d="M0.5 2.5L2.5 0.7 4.5 2.5" stroke="#999" stroke-width="0.7" fill="none"></path></svg>
<div class="a" style="left:657px;top:405.16px;width:62px;height:9.5px;background:#efefef;border-bottom:0.5px solid #d6d6d6;border-left:0.5px solid #dadada"></div>
<div class="a" style="left:719px;top:405.16px;width:70px;height:9.5px;background:#fff;border-bottom:0.5px solid #d6d6d6;border-left:0.5px solid #d6d6d6"></div>
<div class="a" style="left:666px;top:406.67px;font-size:6.3px;line-height:6.5px;transform:scaleX(0.86);transform-origin:0 0;color:#8a8a95">Quotation</div>
<div class="a" style="left:722px;top:406.67px;font-size:6.3px;line-height:6.5px;transform:scaleX(0.86);transform-origin:0 0;color:#8a8a95">Q201906/0031</div>
<svg style="left:782.3px;top:409.47px" width="6" height="2" viewBox="0 0 6 2"><circle cx="0.7" cy="0.8" r="0.6" fill="#333"></circle><circle cx="2.6" cy="0.8" r="0.6" fill="#333"></circle><circle cx="4.5" cy="0.8" r="0.6" fill="#333"></circle></svg>
<div class="a" style="left:657px;top:414.68px;width:62px;height:9.5px;background:#efefef;border-bottom:0.5px solid #d6d6d6;border-left:0.5px solid #dadada"></div>
<div class="a" style="left:719px;top:414.68px;width:70px;height:9.5px;background:#fff;border-bottom:0.5px solid #d6d6d6;border-left:0.5px solid #d6d6d6"></div>
<div class="a" style="left:666px;top:416.19px;font-size:6.3px;line-height:6.5px;transform:scaleX(0.86);transform-origin:0 0;color:#8a8a95">POrderconfirmation</div>
<div class="a" style="left:722px;top:416.19px;font-size:6.3px;line-height:6.5px;transform:scaleX(0.86);transform-origin:0 0;color:#8a8a95">O201906/0058</div>
<svg style="left:782.3px;top:418.30px" width="6" height="2" viewBox="0 0 6 2"><circle cx="0.7" cy="0.8" r="0.6" fill="#333"></circle><circle cx="2.6" cy="0.8" r="0.6" fill="#333"></circle><circle cx="4.5" cy="0.8" r="0.6" fill="#333"></circle></svg>
<div class="a" style="left:649px;top:418.00px;width:151px;height:32px;background:#f5f5f5"></div>
<!-- ============ PAGE CONTENT ============ -->
<div class="a" style="top:129.43px;font-size:5.29px;line-height:6.35px;color:#111;left:217.00px;transform:scaleX(0.87);transform-origin:0 0;">Sample Company · Sample street 1245 · 12345 Sample town</div>
<div class="a" style="top:135.16px;font-size:6.90px;line-height:8.28px;color:#111;left:217.00px;transform:scaleX(0.87);transform-origin:0 0;">John Doe</div>
<div class="a" style="top:142.06px;font-size:6.90px;line-height:8.28px;color:#111;left:217.00px;transform:scaleX(0.87);transform-origin:0 0;">127 Anywhere Street</div>
<div class="a" style="top:148.96px;font-size:6.90px;line-height:8.28px;color:#111;left:217.00px;transform:scaleX(0.87);transform-origin:0 0;">12345 Anytown</div>
<div class="a" style="top:169.26px;font-size:6.90px;line-height:8.28px;color:#111;left:217.00px;transform:scaleX(0.87);transform-origin:0 0;">Delivery address:</div>
<div class="a" style="top:176.16px;font-size:6.90px;line-height:8.28px;color:#111;left:217.00px;transform:scaleX(0.87);transform-origin:0 0;">John Doe</div>
<div class="a" style="top:182.96px;font-size:6.90px;line-height:8.28px;color:#111;left:217.00px;transform:scaleX(0.87);transform-origin:0 0;">125 Anywhere Street</div>
<div class="a" style="top:189.86px;font-size:6.90px;line-height:8.28px;color:#111;left:217.00px;transform:scaleX(0.87);transform-origin:0 0;">12345 Anytown</div>
<div class="a" style="top:210.05px;font-size:7.59px;line-height:9.11px;color:#111;font-weight:bold;left:217.00px;transform:scaleX(0.87);transform-origin:0 0;">Part payment invoice&nbsp; IV201912/0015</div>
<div class="a" style="top:225.55px;font-size:7.59px;line-height:9.11px;color:#111;font-weight:bold;left:217.00px;transform:scaleX(0.87);transform-origin:0 0;">Subject: 1. part payment invoice - O201906/0058 -</div>
<div class="a" style="top:240.03px;font-size:6.79px;line-height:8.14px;color:#111;left:217.00px;transform:scaleX(0.87);transform-origin:0 0;">Dear Mr. Doe</div>
<div class="a" style="top:253.46px;font-size:6.90px;line-height:8.28px;color:#111;left:217.00px;transform:scaleX(0.87);transform-origin:0 0;">we invoice the following items and services:</div>
<div class="a" style="left:408px;top:137.5px;width:130.5px;height:84px;border:0.7px solid #666"></div>
<div class="a" style="left:408px;top:221px;width:131px;height:18px;border:0.6px solid #ddd;border-top:none"></div>
<div class="a" style="top:138.03px;font-size:6.79px;line-height:8.14px;color:#111;left:408.8px;transform:scaleX(0.87);transform-origin:0 0;">Customer No.</div>
<div class="a" style="top:137.96px;font-size:6.90px;line-height:8.28px;color:#111;left:456.50px;transform:scaleX(0.87);transform-origin:0 0;">10000</div>
<div class="a" style="top:144.93px;font-size:6.79px;line-height:8.14px;color:#111;left:408.8px;transform:scaleX(0.87);transform-origin:0 0;">Project</div>
<div class="a" style="top:151.73px;font-size:6.79px;line-height:8.14px;color:#111;left:408.8px;transform:scaleX(0.87);transform-origin:0 0;">Order No.</div>
<div class="a" style="top:151.66px;font-size:6.90px;line-height:8.28px;color:#111;left:456.50px;transform:scaleX(0.87);transform-origin:0 0;">O201906/0061</div>
<div class="a" style="top:158.53px;font-size:6.79px;line-height:8.14px;color:#111;left:408.8px;transform:scaleX(0.87);transform-origin:0 0;">Delivery from</div>
<div class="a" style="top:165.33px;font-size:6.79px;line-height:8.14px;color:#111;left:408.8px;transform:scaleX(0.87);transform-origin:0 0;">Your subject</div>
<div class="a" style="top:178.93px;font-size:6.79px;line-height:8.14px;color:#111;left:408.8px;transform:scaleX(0.87);transform-origin:0 0;">Your contact</div>
<div class="a" style="top:178.86px;font-size:6.90px;line-height:8.28px;color:#111;left:456.50px;transform:scaleX(0.87);transform-origin:0 0;">Anton Admin</div>
<div class="a" style="top:185.73px;font-size:6.79px;line-height:8.14px;color:#111;left:408.8px;transform:scaleX(0.87);transform-origin:0 0;">EMail</div>
<div class="a" style="top:185.66px;font-size:6.90px;line-height:8.28px;color:#111;left:456.50px;transform:scaleX(0.87);transform-origin:0 0;">noreply@ingenious.de</div>
<div class="a" style="top:192.53px;font-size:6.79px;line-height:8.14px;color:#111;left:408.8px;transform:scaleX(0.87);transform-origin:0 0;">Phone</div>
<div class="a" style="top:192.46px;font-size:6.90px;line-height:8.28px;color:#111;left:456.50px;transform:scaleX(0.87);transform-origin:0 0;">0123/456789</div>
<div class="a" style="top:199.33px;font-size:6.79px;line-height:8.14px;color:#111;left:408.8px;transform:scaleX(0.87);transform-origin:0 0;">Fax</div>
<div class="a" style="top:199.26px;font-size:6.90px;line-height:8.28px;color:#111;left:456.50px;transform:scaleX(0.87);transform-origin:0 0;">0123/456780</div>
<div class="a" style="top:213.93px;font-size:6.79px;line-height:8.14px;color:#111;left:408.8px;transform:scaleX(0.87);transform-origin:0 0;">Date</div>
<div class="a" style="top:213.86px;font-size:6.90px;line-height:8.28px;color:#111;left:456.50px;transform:scaleX(0.87);transform-origin:0 0;">12/20/2019</div>
<div class="a" style="left:217.5px;top:268px;width:322px;height:16.5px;border:0.8px solid #555"></div>
<div class="a" style="top:268.76px;font-size:6.90px;line-height:8.28px;color:#111;font-weight:bold;left:219.50px;transform:scaleX(0.87);transform-origin:0 0;">PosNo</div>
<div class="a" style="top:269.04px;font-size:6.44px;line-height:7.73px;color:#111;font-weight:bold;left:242.50px;transform:scaleX(0.87);transform-origin:0 0;">ItemNo.</div>
<div class="a" style="top:268.90px;font-size:6.67px;line-height:8.00px;color:#111;font-weight:bold;left:267.00px;transform:scaleX(0.87);transform-origin:0 0;">Description</div>
<div class="a" style="top:276.01px;font-size:5.98px;line-height:7.18px;color:#111;font-weight:bold;left:268.00px;transform:scaleX(0.87);transform-origin:0 0;">Width</div>
<div class="a" style="top:276.01px;font-size:5.98px;line-height:7.18px;color:#111;font-weight:bold;left:310.00px;transform:scaleX(0.87);transform-origin:0 0;">Height</div>
<div class="a" style="top:276.01px;font-size:5.98px;line-height:7.18px;color:#111;font-weight:bold;left:357.50px;transform:scaleX(0.87);transform-origin:0 0;">Surface</div>
<div class="a" style="top:269.04px;font-size:6.44px;line-height:7.73px;color:#111;font-weight:bold;left:406.00px;transform:scaleX(0.87);transform-origin:0 0;">Quantity</div>
<div class="a" style="top:269.04px;font-size:6.44px;line-height:7.73px;color:#111;font-weight:bold;right:336.50px;transform:scaleX(0.87);transform-origin:100% 0;">SP €</div>
<div class="a" style="top:269.04px;font-size:6.44px;line-height:7.73px;color:#111;font-weight:bold;left:470.00px;transform:scaleX(0.87);transform-origin:0 0;">Rebate</div>
<div class="a" style="top:269.43px;font-size:5.29px;line-height:6.35px;color:#111;font-weight:bold;left:493.00px;transform:scaleX(0.87);transform-origin:0 0;">tax</div>
<div class="a" style="top:269.04px;font-size:6.44px;line-height:7.73px;color:#111;font-weight:bold;right:262.50px;transform:scaleX(0.87);transform-origin:100% 0;">GP €</div>
<div class="a" style="top:286.16px;font-size:6.90px;line-height:8.28px;color:#111;left:219.50px;transform:scaleX(0.87);transform-origin:0 0;">001</div>
<div class="a" style="top:286.16px;font-size:6.90px;line-height:8.28px;color:#111;left:267.50px;transform:scaleX(0.87);transform-origin:0 0;">1. part (50% of net order value 21,410.54 $)</div>
<div class="a" style="top:286.16px;font-size:6.90px;line-height:8.28px;color:#111;right:370.50px;transform:scaleX(0.87);transform-origin:100% 0;">1</div>
<div class="a" style="top:286.16px;font-size:6.90px;line-height:8.28px;color:#111;right:336.50px;transform:scaleX(0.87);transform-origin:100% 0;">10,705.27</div>
<div class="a" style="top:286.16px;font-size:6.90px;line-height:8.28px;color:#111;right:300.00px;transform:scaleX(0.87);transform-origin:100% 0;">0</div>
<div class="a" style="top:286.16px;font-size:6.90px;line-height:8.28px;color:#111;right:262.00px;transform:scaleX(0.87);transform-origin:100% 0;">10,705.27</div>
<div class="a" style="left:217.5px;top:305px;width:322px;height:45.5px;border:0.8px solid #555"></div>
<div class="a" style="left:403.5px;top:305px;width:0.8px;height:45.5px;background:#555"></div>
<div class="a" style="top:308.53px;font-size:6.79px;line-height:8.14px;color:#111;font-weight:bold;left:219.00px;transform:scaleX(0.87);transform-origin:0 0;">Payment terms:</div>
<div class="a" style="top:318.66px;font-size:6.90px;line-height:8.28px;color:#111;left:217.50px;transform:scaleX(0.87);transform-origin:0 0;">Within 7 days with 2.00% discount or within 14 days in total.</div>
<div class="a" style="top:308.09px;font-size:7.01px;line-height:8.42px;color:#111;font-weight:bold;left:406.00px;transform:scaleX(0.87);transform-origin:0 0;">Total net</div>
<div class="a" style="top:308.09px;font-size:7.01px;line-height:8.42px;color:#111;font-weight:bold;right:262.50px;transform:scaleX(0.87);transform-origin:100% 0;">10,705.27</div>
<div class="a" style="top:318.26px;font-size:6.90px;line-height:8.28px;color:#111;left:406.00px;transform:scaleX(0.87);transform-origin:0 0;">VAT 0 %</div>
<div class="a" style="top:318.81px;font-size:5.98px;line-height:7.18px;color:#111;left:450.50px;transform:scaleX(0.87);transform-origin:0 0;">on 0.00 €</div>
<div class="a" style="top:318.26px;font-size:6.90px;line-height:8.28px;color:#111;right:262.50px;transform:scaleX(0.87);transform-origin:100% 0;">0.00</div>
<div class="a" style="top:328.66px;font-size:6.90px;line-height:8.28px;color:#111;left:406.00px;transform:scaleX(0.87);transform-origin:0 0;">VAT 0 %</div>
<div class="a" style="top:329.21px;font-size:5.98px;line-height:7.18px;color:#111;left:450.50px;transform:scaleX(0.87);transform-origin:0 0;">on 0.00 €</div>
<div class="a" style="top:328.66px;font-size:6.90px;line-height:8.28px;color:#111;right:262.50px;transform:scaleX(0.87);transform-origin:100% 0;">0.00</div>
<div class="a" style="top:339.89px;font-size:7.01px;line-height:8.42px;color:#111;font-weight:bold;left:406.00px;transform:scaleX(0.87);transform-origin:0 0;">Gross total</div>
<div class="a" style="top:339.89px;font-size:7.01px;line-height:8.42px;color:#111;font-weight:bold;right:262.50px;transform:scaleX(0.87);transform-origin:100% 0;">10,705.27</div>
<!-- top ruler -->
<div class="a" style="left:179px;top:77.5px;width:397px;height:11.5px;background:#fafafa"></div>
<svg id="hr" style="left:0;top:0" width="800" height="100"><path d="M180.97 83.7v0.8 M182.55 83.7v0.8 M184.12 83.7v0.8 M185.70 83.7v0.8 M187.27 83.7v0.8 M188.85 82.6v2.2 M190.42 83.7v0.8 M192.00 83.7v0.8 M193.57 83.7v0.8 M195.15 83.7v0.8 M196.72 83.7v0.8 M199.88 83.7v0.8 M201.45 83.7v0.8 M203.02 83.7v0.8 M204.60 83.7v0.8 M206.17 83.7v0.8 M207.75 82.6v2.2 M209.32 83.7v0.8 M210.90 83.7v0.8 M212.47 83.7v0.8 M214.05 83.7v0.8 M215.62 83.7v0.8 M218.77 83.7v0.8 M220.35 83.7v0.8 M221.92 83.7v0.8 M223.50 83.7v0.8 M225.07 83.7v0.8 M226.65 82.6v2.2 M228.22 83.7v0.8 M229.80 83.7v0.8 M231.38 83.7v0.8 M232.95 83.7v0.8 M234.52 83.7v0.8 M237.67 83.7v0.8 M239.25 83.7v0.8 M240.82 83.7v0.8 M242.40 83.7v0.8 M243.97 83.7v0.8 M245.55 82.6v2.2 M247.12 83.7v0.8 M248.70 83.7v0.8 M250.27 83.7v0.8 M251.85 83.7v0.8 M253.42 83.7v0.8 M256.57 83.7v0.8 M258.15 83.7v0.8 M259.72 83.7v0.8 M261.30 83.7v0.8 M262.88 83.7v0.8 M264.45 82.6v2.2 M266.02 83.7v0.8 M267.60 83.7v0.8 M269.17 83.7v0.8 M270.75 83.7v0.8 M272.32 83.7v0.8 M275.47 83.7v0.8 M277.05 83.7v0.8 M278.62 83.7v0.8 M280.20 83.7v0.8 M281.77 83.7v0.8 M283.35 82.6v2.2 M284.92 83.7v0.8 M286.50 83.7v0.8 M288.07 83.7v0.8 M289.65 83.7v0.8 M291.22 83.7v0.8 M294.38 83.7v0.8 M295.95 83.7v0.8 M297.52 83.7v0.8 M299.10 83.7v0.8 M300.67 83.7v0.8 M302.25 82.6v2.2 M303.82 83.7v0.8 M305.40 83.7v0.8 M306.97 83.7v0.8 M308.55 83.7v0.8 M310.12 83.7v0.8 M313.27 83.7v0.8 M314.85 83.7v0.8 M316.42 83.7v0.8 M318.00 83.7v0.8 M319.57 83.7v0.8 M321.15 82.6v2.2 M322.72 83.7v0.8 M324.30 83.7v0.8 M325.88 83.7v0.8 M327.45 83.7v0.8 M329.02 83.7v0.8 M332.17 83.7v0.8 M333.75 83.7v0.8 M335.32 83.7v0.8 M336.90 83.7v0.8 M338.47 83.7v0.8 M340.05 82.6v2.2 M341.62 83.7v0.8 M343.20 83.7v0.8 M344.77 83.7v0.8 M346.35 83.7v0.8 M347.92 83.7v0.8 M351.07 83.7v0.8 M352.65 83.7v0.8 M354.23 83.7v0.8 M355.80 83.7v0.8 M357.38 83.7v0.8 M358.95 82.6v2.2 M360.52 83.7v0.8 M362.10 83.7v0.8 M363.67 83.7v0.8 M365.25 83.7v0.8 M366.82 83.7v0.8 M369.98 83.7v0.8 M371.55 83.7v0.8 M373.12 83.7v0.8 M374.70 83.7v0.8 M376.27 83.7v0.8 M377.85 82.6v2.2 M379.42 83.7v0.8 M381.00 83.7v0.8 M382.57 83.7v0.8 M384.15 83.7v0.8 M385.73 83.7v0.8 M388.88 83.7v0.8 M390.45 83.7v0.8 M392.02 83.7v0.8 M393.60 83.7v0.8 M395.17 83.7v0.8 M396.75 82.6v2.2 M398.32 83.7v0.8 M399.90 83.7v0.8 M401.47 83.7v0.8 M403.05 83.7v0.8 M404.62 83.7v0.8 M407.77 83.7v0.8 M409.35 83.7v0.8 M410.92 83.7v0.8 M412.50 83.7v0.8 M414.07 83.7v0.8 M415.65 82.6v2.2 M417.22 83.7v0.8 M418.80 83.7v0.8 M420.38 83.7v0.8 M421.95 83.7v0.8 M423.52 83.7v0.8 M426.67 83.7v0.8 M428.25 83.7v0.8 M429.82 83.7v0.8 M431.40 83.7v0.8 M432.97 83.7v0.8 M434.55 82.6v2.2 M436.12 83.7v0.8 M437.70 83.7v0.8 M439.27 83.7v0.8 M440.85 83.7v0.8 M442.42 83.7v0.8 M445.57 83.7v0.8 M447.15 83.7v0.8 M448.72 83.7v0.8 M450.30 83.7v0.8 M451.88 83.7v0.8 M453.45 82.6v2.2 M455.02 83.7v0.8 M456.60 83.7v0.8 M458.17 83.7v0.8 M459.75 83.7v0.8 M461.32 83.7v0.8 M464.47 83.7v0.8 M466.05 83.7v0.8 M467.62 83.7v0.8 M469.20 83.7v0.8 M470.77 83.7v0.8 M472.35 82.6v2.2 M473.92 83.7v0.8 M475.50 83.7v0.8 M477.07 83.7v0.8 M478.65 83.7v0.8 M480.22 83.7v0.8 M483.38 83.7v0.8 M484.95 83.7v0.8 M486.52 83.7v0.8 M488.10 83.7v0.8 M489.67 83.7v0.8 M491.25 82.6v2.2 M492.82 83.7v0.8 M494.40 83.7v0.8 M495.97 83.7v0.8 M497.55 83.7v0.8 M499.12 83.7v0.8 M502.27 83.7v0.8 M503.85 83.7v0.8 M505.42 83.7v0.8 M507.00 83.7v0.8 M508.57 83.7v0.8 M510.15 82.6v2.2 M511.72 83.7v0.8 M513.30 83.7v0.8 M514.88 83.7v0.8 M516.45 83.7v0.8 M518.02 83.7v0.8 M521.17 83.7v0.8 M522.75 83.7v0.8 M524.32 83.7v0.8 M525.90 83.7v0.8 M527.47 83.7v0.8 M529.05 82.6v2.2 M530.62 83.7v0.8 M532.20 83.7v0.8 M533.77 83.7v0.8 M535.35 83.7v0.8 M536.92 83.7v0.8 M540.07 83.7v0.8 M541.65 83.7v0.8 M543.22 83.7v0.8 M544.80 83.7v0.8 M546.38 83.7v0.8 M547.95 82.6v2.2 M549.52 83.7v0.8 M551.10 83.7v0.8 M552.67 83.7v0.8 M554.25 83.7v0.8 M555.82 83.7v0.8 M558.97 83.7v0.8 M560.55 83.7v0.8 M562.12 83.7v0.8 M563.70 83.7v0.8 M565.27 83.7v0.8 M566.85 82.6v2.2 M568.42 83.7v0.8 M570.00 83.7v0.8 M571.58 83.7v0.8 M573.15 83.7v0.8 M574.72 83.7v0.8" stroke="#6a6a6a" stroke-width="0.55"></path>
<path d="M179.40 80.3v4.6" stroke="#555" stroke-width="0.6"></path>
<path d="M198.30 80.3v4.6" stroke="#555" stroke-width="0.6"></path>
<path d="M236.10 80.3v4.6" stroke="#555" stroke-width="0.6"></path>
<path d="M255.00 80.3v4.6" stroke="#555" stroke-width="0.6"></path>
<path d="M273.90 80.3v4.6" stroke="#555" stroke-width="0.6"></path>
<path d="M292.80 80.3v4.6" stroke="#555" stroke-width="0.6"></path>
<path d="M311.70 80.3v4.6" stroke="#555" stroke-width="0.6"></path>
<path d="M330.60 80.3v4.6" stroke="#555" stroke-width="0.6"></path>
<path d="M349.50 80.3v4.6" stroke="#555" stroke-width="0.6"></path>
<path d="M368.40 80.3v4.6" stroke="#555" stroke-width="0.6"></path>
<path d="M387.30 80.3v4.6" stroke="#555" stroke-width="0.6"></path>
<path d="M406.20 80.3v4.6" stroke="#555" stroke-width="0.6"></path>
<path d="M425.10 80.3v4.6" stroke="#555" stroke-width="0.6"></path>
<path d="M444.00 80.3v4.6" stroke="#555" stroke-width="0.6"></path>
<path d="M462.90 80.3v4.6" stroke="#555" stroke-width="0.6"></path>
<path d="M481.80 80.3v4.6" stroke="#555" stroke-width="0.6"></path>
<path d="M500.70 80.3v4.6" stroke="#555" stroke-width="0.6"></path>
<path d="M519.60 80.3v4.6" stroke="#555" stroke-width="0.6"></path>
<path d="M538.50 80.3v4.6" stroke="#555" stroke-width="0.6"></path>
<path d="M557.40 80.3v4.6" stroke="#555" stroke-width="0.6"></path>
<text x="180.40" y="82.6" font-size="3.9" fill="#666" font-family="Liberation Sans">2</text>
<text x="199.30" y="82.6" font-size="3.9" fill="#666" font-family="Liberation Sans">1</text>
<text x="237.10" y="82.6" font-size="3.9" fill="#666" font-family="Liberation Sans">1</text>
<text x="256.00" y="82.6" font-size="3.9" fill="#666" font-family="Liberation Sans">2</text>
<text x="274.90" y="82.6" font-size="3.9" fill="#666" font-family="Liberation Sans">3</text>
<text x="293.80" y="82.6" font-size="3.9" fill="#666" font-family="Liberation Sans">4</text>
<text x="312.70" y="82.6" font-size="3.9" fill="#666" font-family="Liberation Sans">5</text>
<text x="331.60" y="82.6" font-size="3.9" fill="#666" font-family="Liberation Sans">6</text>
<text x="350.50" y="82.6" font-size="3.9" fill="#666" font-family="Liberation Sans">7</text>
<text x="369.40" y="82.6" font-size="3.9" fill="#666" font-family="Liberation Sans">8</text>
<text x="388.30" y="82.6" font-size="3.9" fill="#666" font-family="Liberation Sans">9</text>
<text x="407.20" y="82.6" font-size="3.9" fill="#666" font-family="Liberation Sans">10</text>
<text x="426.10" y="82.6" font-size="3.9" fill="#666" font-family="Liberation Sans">11</text>
<text x="445.00" y="82.6" font-size="3.9" fill="#666" font-family="Liberation Sans">12</text>
<text x="463.90" y="82.6" font-size="3.9" fill="#666" font-family="Liberation Sans">13</text>
<text x="482.80" y="82.6" font-size="3.9" fill="#666" font-family="Liberation Sans">14</text>
<text x="501.70" y="82.6" font-size="3.9" fill="#666" font-family="Liberation Sans">15</text>
<text x="520.60" y="82.6" font-size="3.9" fill="#666" font-family="Liberation Sans">16</text>
<text x="539.50" y="82.6" font-size="3.9" fill="#666" font-family="Liberation Sans">17</text>
<text x="558.40" y="82.6" font-size="3.9" fill="#666" font-family="Liberation Sans">18</text>
<path d="M235.90 86.2v2h1.6 M254.80 86.2v2h1.6 M273.70 86.2v2h1.6 M292.60 86.2v2h1.6 M311.50 86.2v2h1.6 M330.40 86.2v2h1.6 M349.30 86.2v2h1.6 M368.20 86.2v2h1.6 M387.10 86.2v2h1.6 M406.00 86.2v2h1.6 M424.90 86.2v2h1.6 M443.80 86.2v2h1.6 M462.70 86.2v2h1.6 M481.60 86.2v2h1.6 M500.50 86.2v2h1.6 M519.40 86.2v2h1.6" stroke="#3a3a3a" stroke-width="0.7" fill="none"></path>
<path d="M217 80.2v5.2l2.4-2.6z" fill="#2a2a2a"></path><path d="M537.8 80.2v5.2l-2.4-2.6z" fill="#2a2a2a"></path>
<path d="M213 87.3h5M538.2 87.3h5" stroke="#555" stroke-width="1.2"></path></svg>
<!-- vertical ruler -->
<svg id="vr" style="left:0;top:0" width="120" height="420"><path d="M109.1 93.28h0.8 M109.1 94.85h0.8 M109.1 96.43h0.8 M109.1 98.00h0.8 M109.1 99.58h0.8 M108 101.15h2.2 M109.1 102.73h0.8 M109.1 104.30h0.8 M109.1 105.88h0.8 M109.1 107.45h0.8 M109.1 109.03h0.8 M109.1 112.17h0.8 M109.1 113.75h0.8 M109.1 115.33h0.8 M109.1 116.90h0.8 M109.1 118.47h0.8 M108 120.05h2.2 M109.1 121.62h0.8 M109.1 123.20h0.8 M109.1 124.78h0.8 M109.1 126.35h0.8 M109.1 127.92h0.8 M109.1 131.07h0.8 M109.1 132.65h0.8 M109.1 134.22h0.8 M109.1 135.80h0.8 M109.1 137.38h0.8 M108 138.95h2.2 M109.1 140.53h0.8 M109.1 142.10h0.8 M109.1 143.68h0.8 M109.1 145.25h0.8 M109.1 146.82h0.8 M109.1 149.97h0.8 M109.1 151.55h0.8 M109.1 153.12h0.8 M109.1 154.70h0.8 M109.1 156.28h0.8 M108 157.85h2.2 M109.1 159.43h0.8 M109.1 161.00h0.8 M109.1 162.57h0.8 M109.1 164.15h0.8 M109.1 165.72h0.8 M109.1 168.88h0.8 M109.1 170.45h0.8 M109.1 172.03h0.8 M109.1 173.60h0.8 M109.1 175.17h0.8 M108 176.75h2.2 M109.1 178.32h0.8 M109.1 179.90h0.8 M109.1 181.47h0.8 M109.1 183.05h0.8 M109.1 184.62h0.8 M109.1 187.78h0.8 M109.1 189.35h0.8 M109.1 190.92h0.8 M109.1 192.50h0.8 M109.1 194.07h0.8 M108 195.65h2.2 M109.1 197.22h0.8 M109.1 198.80h0.8 M109.1 200.38h0.8 M109.1 201.95h0.8 M109.1 203.52h0.8 M109.1 206.68h0.8 M109.1 208.25h0.8 M109.1 209.82h0.8 M109.1 211.40h0.8 M109.1 212.97h0.8 M108 214.55h2.2 M109.1 216.12h0.8 M109.1 217.70h0.8 M109.1 219.27h0.8 M109.1 220.85h0.8 M109.1 222.43h0.8 M109.1 225.57h0.8 M109.1 227.15h0.8 M109.1 228.72h0.8 M109.1 230.30h0.8 M109.1 231.88h0.8 M108 233.45h2.2 M109.1 235.02h0.8 M109.1 236.60h0.8 M109.1 238.18h0.8 M109.1 239.75h0.8 M109.1 241.32h0.8 M109.1 244.47h0.8 M109.1 246.05h0.8 M109.1 247.62h0.8 M109.1 249.20h0.8 M109.1 250.77h0.8 M108 252.35h2.2 M109.1 253.93h0.8 M109.1 255.50h0.8 M109.1 257.07h0.8 M109.1 258.65h0.8 M109.1 260.23h0.8 M109.1 263.38h0.8 M109.1 264.95h0.8 M109.1 266.52h0.8 M109.1 268.10h0.8 M109.1 269.67h0.8 M108 271.25h2.2 M109.1 272.82h0.8 M109.1 274.40h0.8 M109.1 275.98h0.8 M109.1 277.55h0.8 M109.1 279.12h0.8 M109.1 282.27h0.8 M109.1 283.85h0.8 M109.1 285.42h0.8 M109.1 287.00h0.8 M109.1 288.57h0.8 M108 290.15h2.2 M109.1 291.73h0.8 M109.1 293.30h0.8 M109.1 294.88h0.8 M109.1 296.45h0.8 M109.1 298.02h0.8 M109.1 301.17h0.8 M109.1 302.75h0.8 M109.1 304.32h0.8 M109.1 305.90h0.8 M109.1 307.48h0.8 M108 309.05h2.2 M109.1 310.62h0.8 M109.1 312.20h0.8 M109.1 313.77h0.8 M109.1 315.35h0.8 M109.1 316.92h0.8 M109.1 320.07h0.8 M109.1 321.65h0.8 M109.1 323.23h0.8 M109.1 324.80h0.8 M109.1 326.38h0.8 M108 327.95h2.2 M109.1 329.52h0.8 M109.1 331.10h0.8 M109.1 332.67h0.8 M109.1 334.25h0.8 M109.1 335.82h0.8 M109.1 338.98h0.8 M109.1 340.55h0.8 M109.1 342.12h0.8 M109.1 343.70h0.8 M109.1 345.27h0.8 M108 346.85h2.2 M109.1 348.42h0.8 M109.1 350.00h0.8 M109.1 351.57h0.8 M109.1 353.15h0.8 M109.1 354.73h0.8 M109.1 357.88h0.8 M109.1 359.45h0.8 M109.1 361.02h0.8 M109.1 362.60h0.8 M109.1 364.17h0.8 M108 365.75h2.2 M109.1 367.32h0.8 M109.1 368.90h0.8 M109.1 370.48h0.8 M109.1 372.05h0.8 M109.1 373.62h0.8 M109.1 376.77h0.8 M109.1 378.35h0.8 M109.1 379.92h0.8 M109.1 381.50h0.8 M109.1 383.07h0.8 M108 384.65h2.2 M109.1 386.22h0.8 M109.1 387.80h0.8 M109.1 389.37h0.8 M109.1 390.95h0.8 M109.1 392.52h0.8 M109.1 395.68h0.8 M109.1 397.25h0.8 M109.1 398.82h0.8 M109.1 400.40h0.8 M109.1 401.97h0.8 M108 403.55h2.2 M109.1 405.12h0.8 M109.1 406.70h0.8 M109.1 408.27h0.8 M109.1 409.85h0.8 M109.1 411.43h0.8 M109.1 414.57h0.8" stroke="#6a6a6a" stroke-width="0.55"></path>
<path d="M105.8 91.70h4.6" stroke="#555" stroke-width="0.6"></path>
<text x="0" y="0" font-size="3.9" fill="#666" font-family="Liberation Sans" transform="translate(107.4 92.70) rotate(-90)" text-anchor="end">2</text>
<path d="M105.8 110.60h4.6" stroke="#555" stroke-width="0.6"></path>
<text x="0" y="0" font-size="3.9" fill="#666" font-family="Liberation Sans" transform="translate(107.4 111.60) rotate(-90)" text-anchor="end">1</text>
<path d="M105.8 148.40h4.6" stroke="#555" stroke-width="0.6"></path>
<text x="0" y="0" font-size="3.9" fill="#666" font-family="Liberation Sans" transform="translate(107.4 149.40) rotate(-90)" text-anchor="end">1</text>
<path d="M105.8 167.30h4.6" stroke="#555" stroke-width="0.6"></path>
<text x="0" y="0" font-size="3.9" fill="#666" font-family="Liberation Sans" transform="translate(107.4 168.30) rotate(-90)" text-anchor="end">2</text>
<path d="M105.8 186.20h4.6" stroke="#555" stroke-width="0.6"></path>
<text x="0" y="0" font-size="3.9" fill="#666" font-family="Liberation Sans" transform="translate(107.4 187.20) rotate(-90)" text-anchor="end">3</text>
<path d="M105.8 205.10h4.6" stroke="#555" stroke-width="0.6"></path>
<text x="0" y="0" font-size="3.9" fill="#666" font-family="Liberation Sans" transform="translate(107.4 206.10) rotate(-90)" text-anchor="end">4</text>
<path d="M105.8 224.00h4.6" stroke="#555" stroke-width="0.6"></path>
<text x="0" y="0" font-size="3.9" fill="#666" font-family="Liberation Sans" transform="translate(107.4 225.00) rotate(-90)" text-anchor="end">5</text>
<path d="M105.8 242.90h4.6" stroke="#555" stroke-width="0.6"></path>
<text x="0" y="0" font-size="3.9" fill="#666" font-family="Liberation Sans" transform="translate(107.4 243.90) rotate(-90)" text-anchor="end">6</text>
<path d="M105.8 261.80h4.6" stroke="#555" stroke-width="0.6"></path>
<text x="0" y="0" font-size="3.9" fill="#666" font-family="Liberation Sans" transform="translate(107.4 262.80) rotate(-90)" text-anchor="end">7</text>
<path d="M105.8 280.70h4.6" stroke="#555" stroke-width="0.6"></path>
<text x="0" y="0" font-size="3.9" fill="#666" font-family="Liberation Sans" transform="translate(107.4 281.70) rotate(-90)" text-anchor="end">8</text>
<path d="M105.8 299.60h4.6" stroke="#555" stroke-width="0.6"></path>
<text x="0" y="0" font-size="3.9" fill="#666" font-family="Liberation Sans" transform="translate(107.4 300.60) rotate(-90)" text-anchor="end">9</text>
<path d="M105.8 318.50h4.6" stroke="#555" stroke-width="0.6"></path>
<text x="0" y="0" font-size="3.9" fill="#666" font-family="Liberation Sans" transform="translate(107.4 319.50) rotate(-90)" text-anchor="end">10</text>
<path d="M105.8 337.40h4.6" stroke="#555" stroke-width="0.6"></path>
<text x="0" y="0" font-size="3.9" fill="#666" font-family="Liberation Sans" transform="translate(107.4 338.40) rotate(-90)" text-anchor="end">11</text>
<path d="M105.8 356.30h4.6" stroke="#555" stroke-width="0.6"></path>
<text x="0" y="0" font-size="3.9" fill="#666" font-family="Liberation Sans" transform="translate(107.4 357.30) rotate(-90)" text-anchor="end">12</text>
<path d="M105.8 375.20h4.6" stroke="#555" stroke-width="0.6"></path>
<text x="0" y="0" font-size="3.9" fill="#666" font-family="Liberation Sans" transform="translate(107.4 376.20) rotate(-90)" text-anchor="end">13</text>
<path d="M105.8 394.10h4.6" stroke="#555" stroke-width="0.6"></path>
<text x="0" y="0" font-size="3.9" fill="#666" font-family="Liberation Sans" transform="translate(107.4 395.10) rotate(-90)" text-anchor="end">14</text>
<path d="M105.8 413.00h4.6" stroke="#555" stroke-width="0.6"></path>
<text x="0" y="0" font-size="3.9" fill="#666" font-family="Liberation Sans" transform="translate(107.4 414.00) rotate(-90)" text-anchor="end">15</text>
<path d="M110.5 127.8l3.2-1.8v3.6z" fill="#2a2a2a"></path></svg>
<!-- doc scrollbar -->
<div class="a" style="left:639px;top:90px;width:9.5px;height:328px;background:#f0f0f0"></div>
<div class="a" style="left:640px;top:143px;width:7.5px;height:168px;background:#d0d0d0"></div>
<svg style="left:641.5px;top:93px" width="5" height="3" viewBox="0 0 5 3"><path d="M0.3 2.7L2.5 0.5 4.7 2.7" stroke="#555" stroke-width="0.8" fill="none"></path></svg>
<svg style="left:641.5px;top:412px" width="5" height="3" viewBox="0 0 5 3"><path d="M0.3 0.3L2.5 2.5 4.7 0.3" stroke="#555" stroke-width="0.8" fill="none"></path></svg>
<div class="a" style="left:648px;top:77px;width:1px;height:358px;background:#cfcfcf"></div>
<!-- ============ BOTTOM ============ -->
<div class="a" style="left:102px;top:418px;width:698px;height:17.5px;background:#f5f5f5"></div>
<div class="a" style="left:0;top:435.5px;width:800px;height:14.5px;background:#f5f5f5;border-top:0.8px solid #d4d4d4"></div>
<div class="t" style="left: 113.2px; top: 424.8px; color: rgb(51, 51, 51); width: auto; transform: scaleX(0.8409); transform-origin: 0px 0px;">created</div>
<div class="a" style="left:168px;top:422px;width:88.5px;height:10.5px;background:#fff;border:0.8px solid #888"></div>
<div class="t" style="left: 170px; top: 425.1px; color: rgb(34, 34, 34); width: auto; transform: scaleX(0.8194); transform-origin: 0px 0px;">12/20/2019 9:42:27 AM - admin</div>
<div class="t" style="left: 307.2px; top: 424.8px; color: rgb(51, 51, 51); width: auto; transform: scaleX(0.802); transform-origin: 0px 0px;">Modified</div>
<div class="a" style="left:342px;top:422px;width:88.5px;height:10.5px;background:#fff;border:0.8px solid #888"></div>
<div class="t" style="left: 344px; top: 425.1px; color: rgb(34, 34, 34); width: auto; transform: scaleX(0.8194); transform-origin: 0px 0px;">12/20/2019 9:42:27 AM - admin</div>
<div class="t" style="left: 6.75px; top: 439.5px; color: rgb(60, 74, 106); width: auto; transform: scaleX(0.8418); transform-origin: 0px 0px;">Projects [2 / 311]</div>
<div class="a" style="left:54px;top:436px;width:102px;height:14px;background:#fafafa"></div>
<div class="t" style="left: 60px; top: 439.5px; color: rgb(34, 116, 168); width: auto; transform: scaleX(0.8183); transform-origin: 0px 0px;">Part payment invoice&nbsp; IV201912/0015</div>
<div class="a" style="left:54px;top:448px;width:102px;height:1.5px;background:#3f87c8"></div>


</body></html>
